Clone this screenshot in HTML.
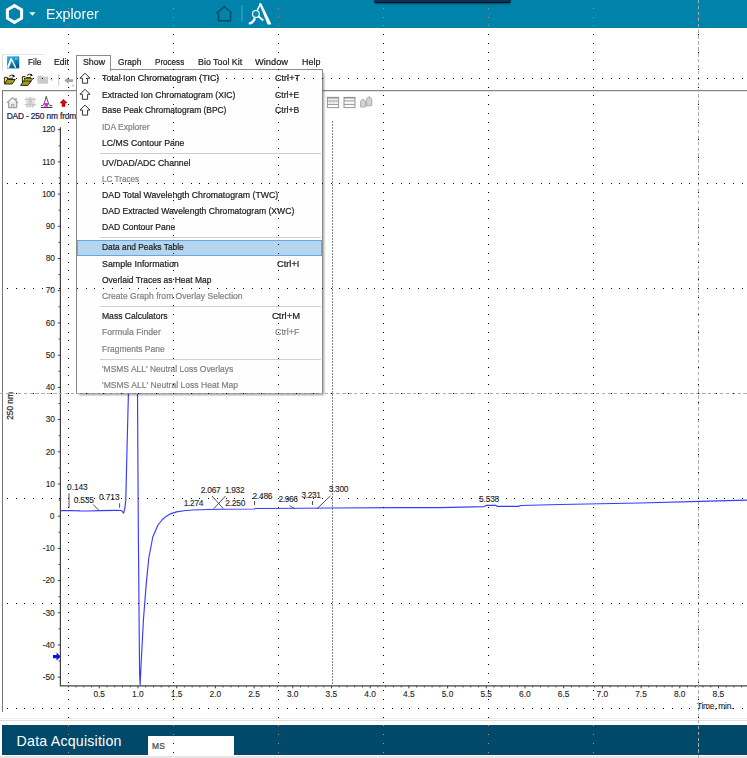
<!DOCTYPE html>
<html><head><meta charset="utf-8">
<style>
html,body{margin:0;padding:0;}
body{width:747px;height:758px;overflow:hidden;background:#fff;position:relative;font-family:"Liberation Sans",sans-serif;}
.abs{position:absolute;}
.t{position:absolute;white-space:nowrap;z-index:3;-webkit-text-stroke:0.22px currentColor;}
svg{position:absolute;left:0;top:0;}
</style></head><body>
<div class="abs" style="left:0;top:0;width:747px;height:28px;background:#0083AB;"></div>
<div class="abs" style="left:373.6px;top:-6px;width:137.6px;height:8.4px;background:#0d3458;border-bottom:1px solid #04101e;border-radius:3px;box-shadow:0 1.2px 1.2px #04506f;"></div>
<svg width="300" height="28" style="z-index:2">
  <polygon points="14.5,5.6 21.6,9.8 21.6,18.2 14.5,22.4 7.4,18.2 7.4,9.8" fill="none" stroke="#fff" stroke-width="3" stroke-linejoin="miter"/>
  <polygon points="29.3,12.2 35.5,12.2 32.4,15.8" fill="#fff"/>
  <path d="M216.2 13.6 L224.3 6.6 L232 13.6 M218.5 13.6 V20.7 H230.6 V13.6" fill="none" stroke="#0b4a67" stroke-width="1.4" stroke-linejoin="miter"/>
  <rect x="241.4" y="5" width="1.1" height="16.5" fill="#4ba3bf"/>
  <path d="M259 3.2 h2.2 L271 23.2 v1.2 h-3.4z" fill="#fff"/>
  <path d="M260.4 4 L257.2 10.5" fill="none" stroke="#fff" stroke-width="1.6"/>
  <path d="M254.9 18.2 Q252.8 23.4 248.8 23.4" fill="none" stroke="#fff" stroke-width="2.4"/>
  <circle cx="255.9" cy="13.9" r="3.4" fill="#0d88af" stroke="#fff" stroke-width="1.2"/>
  <path d="M258.6 16.6 L263.2 20.6" stroke="#fff" stroke-width="2"/>
</svg>
<div class="abs" style="left:2px;top:54px;width:43px;height:1px;background:#e4e4e4;"></div>
<div class="abs" style="left:2px;top:54px;width:1px;height:17px;background:#dcdcdc;"></div>
<div class="abs" style="left:2px;top:89.5px;width:745px;height:1.2px;background:#858585;"></div>
<div class="abs" style="left:2px;top:91px;width:745px;height:1px;background:#e2e2e2;"></div>
<div class="abs" style="left:1.7px;top:90px;width:1.4px;height:622px;background:#787878;"></div>
<div class="abs" style="left:0;top:718px;width:747px;height:1px;background:#ececec;"></div>
<div class="abs" style="left:0;top:720.2px;width:747px;height:1px;background:#dedede;"></div>
<div class="abs" style="left:2px;top:724.8px;width:745px;height:30.7px;background:#00496B;"></div>
<div class="abs" style="left:148px;top:736px;width:86px;height:19px;background:#fff;"></div>
<div class="abs" style="left:0;top:755.5px;width:747px;height:3px;background:#e6e6e6;"></div>
<svg width="120" height="112" style="z-index:2">
 <defs><linearGradient id="ag" x1="0" y1="0" x2="0.5" y2="1"><stop offset="0" stop-color="#2fb0e4"/><stop offset="0.5" stop-color="#1490c4"/><stop offset="1" stop-color="#005a88"/></linearGradient></defs>
 <rect x="7.1" y="56.4" width="12.1" height="12" fill="url(#ag)"/>
 <path d="M7.9 67.6 L11.4 58.4" fill="none" stroke="#fff" stroke-width="2"/>
 <path d="M11.2 58.6 L15.7 67.8" fill="none" stroke="#f4fbff" stroke-width="1.4"/>
 <path d="M15.6 59.8 v-1.6 q1.4 -0.6 1.6 0.4 v1.2" fill="none" stroke="#bfe6f8" stroke-width="0.7"/>
 <!-- folder 1 -->
 <path d="M4.4 83.8 V77.3 h2.8 l1 1 h4.4 v1.6" fill="#f0ea58" stroke="#1c1c08" stroke-width="0.9"/>
 <path d="M4.4 84 l2.9 -4.5 h8 l-3.2 4.5z" fill="#a39c1e" stroke="#1c1c08" stroke-width="0.9" stroke-linejoin="round"/>
 <path d="M9.2 76.2 q2.4 -2.2 5 -0.4" fill="none" stroke="#111" stroke-width="0.9"/>
 <path d="M12.8 74.6 l2.4 1.6 l-2.6 1.2z" fill="#111"/>
 <!-- folder 2 -->
 <path d="M22.4 82.6 V76.5 h2.8 l1 1 h4.4 v1.6" fill="#f0ea58" stroke="#1c1c08" stroke-width="0.9"/>
 <path d="M22.4 83 l2.9 -4.3 h7.4 l-3 4.3z" fill="#c9c238" stroke="#1c1c08" stroke-width="0.8" stroke-linejoin="round"/>
 <path d="M20.6 85.4 l2.9 -4.4 h7.6 l-3.2 4.4z" fill="#a39c1e" stroke="#1c1c08" stroke-width="0.9" stroke-linejoin="round"/>
 <path d="M27 75.4 q2.4 -2.2 5 -0.4" fill="none" stroke="#111" stroke-width="0.9"/>
 <path d="M30.6 73.8 l2.4 1.6 l-2.6 1.2z" fill="#111"/>
 <!-- folder 3 grey -->
 <path d="M37.5 76.6 q0 -1.2 1.2 -1.2 h3 l1 1.2 h5.4 v7.2 h-10.6z" fill="#cbcbcb"/>
 <path d="M50 79.2 h3 l-1.5 1.8z" fill="#b8b8b8"/>
 <rect x="58" y="74.5" width="1.2" height="11" fill="#d2d2d2"/>
 <path d="M64.3 80.6 l4.4 -3.4 v2.1 h4.4 v2.6 h-4.4 v2.1z" fill="#a4a4a4"/>
 <text x="72" y="86.5" font-size="4.5" fill="#aaa" font-family="Liberation Sans">s</text>
 <!-- pane icons -->
 <g fill="none" stroke="#a2a2a2" stroke-width="1.3" stroke-linejoin="round">
  <path d="M7 102.8 L12.6 97.8 L18 102.8"/>
  <path d="M8.6 102 V107.6 H16.6 V102" fill="#ececec"/>
  <path d="M11.5 107.6 v-3.2 h2.4 v3.2" stroke-width="1"/>
  <path d="M16 97.8 v2.6" stroke-width="1.4"/>
 </g>
 <rect x="25.6" y="97.4" width="9.4" height="9.6" fill="#e3e3e3"/>
 <g fill="none" stroke="#c0c0c0" stroke-width="0.9">
  <path d="M24.6 99.4 h11.4 M24.6 104.6 h11.4 M30.3 96.8 v11"/>
  <path d="M27.6 107.6 q2 -9.4 2.7 -9.4 q0.7 0 2.7 9.4"/>
 </g>
 <path d="M40.8 107.4 h11.6" stroke="#2a2a2a" stroke-width="1"/>
 <path d="M41 105.6 h1.6 q1.4 -0.6 3.7 -9.2 q2.3 8.6 3.7 9.2 h2.2" fill="none" stroke="#3a3a3a" stroke-width="0.9" stroke-linejoin="round"/>
 <rect x="44.4" y="103" width="3.5" height="3.6" fill="#f018e6"/>
 <path d="M63.5 99.2 l3.5 3.7 h-2 v3.6 h-3 v-3.6 h-2z" fill="#ee0000" stroke="#5a0000" stroke-width="0.5"/>
</svg>
<svg width="380" height="112" style="z-index:2">
 <g fill="none" stroke="#969696" stroke-width="1">
  <rect x="327.4" y="97.4" width="11.2" height="10.2" fill="#fbfbfb"/>
  <path d="M327.4 101 h11.2 M327.4 104.4 h11.2" />
  <rect x="327.4" y="97.2" width="11.2" height="1.3" fill="#8c8c8c" stroke="none"/>
  <path d="M329 102.7 h8 M329 99.7 h8" stroke="#d0d0d0" stroke-width="0.8" stroke-dasharray="2.5 1"/>
  <rect x="344" y="97.4" width="11" height="10.2" fill="#fbfbfb"/>
  <path d="M344 100.9 h11 M344 104.4 h11"/>
  <rect x="344" y="97.2" width="11" height="1.3" fill="#8c8c8c" stroke="none"/>
 </g>
 <g fill="#d4d4d4" stroke="#a6a6a6" stroke-width="0.9">
  <path d="M360.6 107 v-6 l2.4 -2 l2.6 2 v6z"/>
  <path d="M366.6 105.8 v-6.6 l1 -1.6 h3 l1.2 1.6 v6.6z"/>
  <path d="M369.2 97.4 v-1.2" fill="none"/>
 </g>
</svg>
<svg width="747" height="758" style="z-index:1">
<path d="M60.4 127.3 V686.3 M59.8 685.8 H747" fill="none" stroke="#444" stroke-width="1.2"/>
<path d="M57.8 677.2 H60 M58.6 661.1 H60 M57.8 645.0 H60 M58.6 628.9 H60 M57.8 612.8 H60 M58.6 596.7 H60 M57.8 580.6 H60 M58.6 564.5 H60 M57.8 548.4 H60 M58.6 532.3 H60 M57.8 516.2 H60 M58.6 500.1 H60 M57.8 484.0 H60 M58.6 467.9 H60 M57.8 451.8 H60 M58.6 435.7 H60 M57.8 419.6 H60 M58.6 403.5 H60 M57.8 387.4 H60 M58.6 371.3 H60 M57.8 355.2 H60 M58.6 339.0 H60 M57.8 322.9 H60 M58.6 306.8 H60 M57.8 290.7 H60 M58.6 274.6 H60 M57.8 258.5 H60 M58.6 242.4 H60 M57.8 226.3 H60 M58.6 210.2 H60 M57.8 194.1 H60 M58.6 178.0 H60 M57.8 161.9 H60 M58.6 145.8 H60 M57.8 129.7 H60" stroke="#3c3c3c" stroke-width="1" fill="none"/>
<path d="M68.3 686 V687.4 M76.1 686 V687.4 M83.8 686 V687.4 M91.6 686 V687.4 M99.3 686 V688.3 M107.0 686 V687.4 M114.8 686 V687.4 M122.5 686 V687.4 M130.3 686 V687.4 M138.0 686 V688.3 M145.7 686 V687.4 M153.5 686 V687.4 M161.2 686 V687.4 M169.0 686 V687.4 M176.7 686 V688.3 M184.4 686 V687.4 M192.2 686 V687.4 M199.9 686 V687.4 M207.7 686 V687.4 M215.4 686 V688.3 M223.1 686 V687.4 M230.9 686 V687.4 M238.6 686 V687.4 M246.4 686 V687.4 M254.1 686 V688.3 M261.8 686 V687.4 M269.6 686 V687.4 M277.3 686 V687.4 M285.1 686 V687.4 M292.8 686 V688.3 M300.5 686 V687.4 M308.3 686 V687.4 M316.0 686 V687.4 M323.8 686 V687.4 M331.5 686 V688.3 M339.2 686 V687.4 M347.0 686 V687.4 M354.7 686 V687.4 M362.5 686 V687.4 M370.2 686 V688.3 M377.9 686 V687.4 M385.7 686 V687.4 M393.4 686 V687.4 M401.2 686 V687.4 M408.9 686 V688.3 M416.6 686 V687.4 M424.4 686 V687.4 M432.1 686 V687.4 M439.9 686 V687.4 M447.6 686 V688.3 M455.3 686 V687.4 M463.1 686 V687.4 M470.8 686 V687.4 M478.6 686 V687.4 M486.3 686 V688.3 M494.0 686 V687.4 M501.8 686 V687.4 M509.5 686 V687.4 M517.3 686 V687.4 M525.0 686 V688.3 M532.7 686 V687.4 M540.5 686 V687.4 M548.2 686 V687.4 M556.0 686 V687.4 M563.7 686 V688.3 M571.4 686 V687.4 M579.2 686 V687.4 M586.9 686 V687.4 M594.7 686 V687.4 M602.4 686 V688.3 M610.1 686 V687.4 M617.9 686 V687.4 M625.6 686 V687.4 M633.4 686 V687.4 M641.1 686 V688.3 M648.8 686 V687.4 M656.6 686 V687.4 M664.3 686 V687.4 M672.1 686 V687.4 M679.8 686 V688.3 M687.5 686 V687.4 M695.3 686 V687.4 M703.0 686 V687.4 M710.8 686 V687.4 M718.5 686 V688.3 M726.2 686 V687.4 M734.0 686 V687.4 M741.7 686 V687.4" stroke="#3c3c3c" stroke-width="1" fill="none"/>
<line x1="332.5" y1="121" x2="332.5" y2="685" stroke="#888" stroke-width="1" stroke-dasharray="2 1"/>
<polyline points="61,510.6 70,510.5 80,510.9 88,511 100,510.6 115,510.4 121.5,510.5 123.6,513.2 124.9,508 125.8,500 126.5,470 128.4,394 128.8,380 137.2,380 137.5,394 138.4,540 139.6,674 140.1,684.7 141.4,658 143.5,618.7 146.2,584.4 148.8,558 152.8,537 158,525 162,520 166,516.4 171,513.6 176.5,511.9 184,510.8 192.3,510 200,509.7 218.7,509.3 254,509 256,508.5 300,508.3 333,508 400,507.6 440,507.6 484,506.6 486,505.4 496,505.4 497.5,506.4 518,506.4 521,505.5 560,504.5 600,503.8 640,503 700,501.4 747,500.1" fill="none" stroke="#3a3aff" stroke-width="1.15" stroke-linejoin="round"/>
<path d="M69 493.3 V507.8 M93.2 504.5 L98.7 510.2 M119.6 503.3 V507.8 M212 496 L223.4 508.7 M225.5 496 L213.8 508.7 M254.5 501 V505 M289.6 505.6 L294.7 508.7 M312.5 501 V505 M330.3 496 L317 508.7" stroke="#3c3c3c" stroke-width="0.9" fill="none"/>
<path d="M53 655 h3.6 v-2.6 l4 4.2 l-4 4.2 v-2.6 h-3.6 z" fill="#1010e0"/>
</svg>
<div class="abs" style="white-space:nowrap;z-index:3;left:-9.6px;top:399.6px;width:40px;height:12px;line-height:12px;text-align:center;transform:rotate(-90deg);font-size:8.4px;color:#222;letter-spacing:-0.05px;-webkit-text-stroke:0.2px #222">250 nm</div>
<div class="abs" style="left:79px;top:73px;width:244.6px;height:321.8px;background:rgba(0,0,0,0.4);filter:blur(1.1px);z-index:4"></div>
<div class="abs" style="left:76px;top:69px;width:245px;height:323px;background:#fefefe;border:1px solid #8c8c8c;z-index:5"></div>
<div class="abs" style="left:76px;top:55px;width:33px;height:15px;background:#fefefe;border:1px solid #8c8c8c;border-bottom:none;z-index:5"></div>
<div class="abs" style="left:77px;top:240px;width:243px;height:14px;background:#b5d5ef;border:1px solid #66a7e0;z-index:5"></div>
<div class="abs" style="left:100px;top:153.3px;width:221px;height:1px;background:#d0d0d0;z-index:5"></div>
<div class="abs" style="left:100px;top:237.1px;width:221px;height:1px;background:#d0d0d0;z-index:5"></div>
<div class="abs" style="left:100px;top:306.2px;width:221px;height:1px;background:#d0d0d0;z-index:5"></div>
<div class="abs" style="left:100px;top:359px;width:221px;height:1px;background:#d0d0d0;z-index:5"></div>
<svg width="120" height="130" style="z-index:6">
<path d="M85 73.2 l5 5 h-2.4 v5 h-5.2 v-5 h-2.4z" fill="#fff" stroke="#333" stroke-width="1" stroke-linejoin="miter"/>
<path d="M85 89.3 l5 5 h-2.4 v5 h-5.2 v-5 h-2.4z" fill="#fff" stroke="#333" stroke-width="1" stroke-linejoin="miter"/>
<path d="M85 105.10000000000001 l5 5 h-2.4 v5 h-5.2 v-5 h-2.4z" fill="#fff" stroke="#333" stroke-width="1" stroke-linejoin="miter"/>
</svg>
<div class="t" id="t0" style="left:46.2px;top:3.3px;font-size:15.3px;line-height:21px;color:#fff;-webkit-text-stroke:0;transform-origin:0 50%;transform:scaleX(0.9268);">Explorer</div>
<div class="t" id="t1" style="left:16.6px;top:730.9px;font-size:14.2px;line-height:20px;letter-spacing:0.209px;color:#fff;-webkit-text-stroke:0;">Data Acquisition</div>
<div class="t" id="t2" style="left:152.0px;top:740.2px;font-size:8.4px;line-height:12px;letter-spacing:0.269px;color:#444;">MS</div>
<div class="t" id="t3" style="left:27.5px;top:55.2px;font-size:9.7px;line-height:14px;color:#1b1b1b;transform-origin:0 50%;transform:scaleX(0.8640);">File</div>
<div class="t" id="t4" style="left:53.9px;top:55.2px;font-size:9.7px;line-height:14px;color:#1b1b1b;transform-origin:0 50%;transform:scaleX(0.8920);">Edit</div>
<div class="t" id="t5" style="left:82.7px;top:55.2px;font-size:9.7px;line-height:14px;color:#1b1b1b;z-index:6;transform-origin:0 50%;transform:scaleX(0.9078);">Show</div>
<div class="t" id="t6" style="left:117.6px;top:55.2px;font-size:9.7px;line-height:14px;color:#1b1b1b;transform-origin:0 50%;transform:scaleX(0.8650);">Graph</div>
<div class="t" id="t7" style="left:155.0px;top:55.2px;font-size:9.7px;line-height:14px;color:#1b1b1b;transform-origin:0 50%;transform:scaleX(0.8343);">Process</div>
<div class="t" id="t8" style="left:197.9px;top:55.2px;font-size:9.7px;line-height:14px;color:#1b1b1b;transform-origin:0 50%;transform:scaleX(0.9152);">Bio Tool Kit</div>
<div class="t" id="t9" style="left:255.2px;top:55.2px;font-size:9.7px;line-height:14px;color:#1b1b1b;transform-origin:0 50%;transform:scaleX(0.9603);">Window</div>
<div class="t" id="t10" style="left:301.5px;top:55.2px;font-size:9.7px;line-height:14px;color:#1b1b1b;transform-origin:0 50%;transform:scaleX(0.9229);">Help</div>
<div class="t" id="t11" style="left:42.7px;top:671.0px;font-size:8.4px;line-height:12px;letter-spacing:-0.036px;color:#242424;-webkit-text-stroke:0.1px;">-50</div>
<div class="t" id="t12" style="left:42.7px;top:638.7px;font-size:8.4px;line-height:12px;letter-spacing:-0.036px;color:#242424;-webkit-text-stroke:0.1px;">-40</div>
<div class="t" id="t13" style="left:42.7px;top:606.5px;font-size:8.4px;line-height:12px;letter-spacing:-0.036px;color:#242424;-webkit-text-stroke:0.1px;">-30</div>
<div class="t" id="t14" style="left:42.7px;top:574.3px;font-size:8.4px;line-height:12px;letter-spacing:-0.036px;color:#242424;-webkit-text-stroke:0.1px;">-20</div>
<div class="t" id="t15" style="left:42.7px;top:542.1px;font-size:8.4px;line-height:12px;letter-spacing:-0.036px;color:#242424;-webkit-text-stroke:0.1px;">-10</div>
<div class="t" id="t16" style="left:49.7px;top:509.9px;font-size:8.4px;line-height:12px;letter-spacing:0.328px;color:#242424;-webkit-text-stroke:0.1px;">0</div>
<div class="t" id="t17" style="left:45.7px;top:477.7px;font-size:8.4px;line-height:12px;letter-spacing:-0.164px;color:#242424;-webkit-text-stroke:0.1px;">10</div>
<div class="t" id="t18" style="left:45.7px;top:445.5px;font-size:8.4px;line-height:12px;letter-spacing:-0.164px;color:#242424;-webkit-text-stroke:0.1px;">20</div>
<div class="t" id="t19" style="left:45.7px;top:413.3px;font-size:8.4px;line-height:12px;letter-spacing:-0.164px;color:#242424;-webkit-text-stroke:0.1px;">30</div>
<div class="t" id="t20" style="left:45.7px;top:381.1px;font-size:8.4px;line-height:12px;letter-spacing:-0.164px;color:#242424;-webkit-text-stroke:0.1px;">40</div>
<div class="t" id="t21" style="left:45.7px;top:348.9px;font-size:8.4px;line-height:12px;letter-spacing:-0.164px;color:#242424;-webkit-text-stroke:0.1px;">50</div>
<div class="t" id="t22" style="left:45.7px;top:316.6px;font-size:8.4px;line-height:12px;letter-spacing:-0.164px;color:#242424;-webkit-text-stroke:0.1px;">60</div>
<div class="t" id="t23" style="left:45.7px;top:284.4px;font-size:8.4px;line-height:12px;letter-spacing:-0.164px;color:#242424;-webkit-text-stroke:0.1px;">70</div>
<div class="t" id="t24" style="left:45.7px;top:252.2px;font-size:8.4px;line-height:12px;letter-spacing:-0.164px;color:#242424;-webkit-text-stroke:0.1px;">80</div>
<div class="t" id="t25" style="left:45.7px;top:220.0px;font-size:8.4px;line-height:12px;letter-spacing:-0.164px;color:#242424;-webkit-text-stroke:0.1px;">90</div>
<div class="t" id="t26" style="left:41.9px;top:187.8px;font-size:8.4px;line-height:12px;letter-spacing:-0.395px;color:#242424;-webkit-text-stroke:0.1px;">100</div>
<div class="t" id="t27" style="left:41.9px;top:155.6px;font-size:8.4px;line-height:12px;letter-spacing:-0.186px;color:#242424;-webkit-text-stroke:0.1px;">110</div>
<div class="t" id="t28" style="left:41.9px;top:123.4px;font-size:8.4px;line-height:12px;letter-spacing:-0.395px;color:#242424;-webkit-text-stroke:0.1px;">120</div>
<div class="t" id="t29" style="left:93.4px;top:687.6px;font-size:8.4px;line-height:12px;letter-spacing:-0.019px;color:#242424;-webkit-text-stroke:0.1px;">0.5</div>
<div class="t" id="t30" style="left:132.1px;top:687.6px;font-size:8.4px;line-height:12px;letter-spacing:-0.019px;color:#242424;-webkit-text-stroke:0.1px;">1.0</div>
<div class="t" id="t31" style="left:170.8px;top:687.6px;font-size:8.4px;line-height:12px;letter-spacing:-0.019px;color:#242424;-webkit-text-stroke:0.1px;">1.5</div>
<div class="t" id="t32" style="left:209.5px;top:687.6px;font-size:8.4px;line-height:12px;letter-spacing:-0.019px;color:#242424;-webkit-text-stroke:0.1px;">2.0</div>
<div class="t" id="t33" style="left:248.2px;top:687.6px;font-size:8.4px;line-height:12px;letter-spacing:-0.019px;color:#242424;-webkit-text-stroke:0.1px;">2.5</div>
<div class="t" id="t34" style="left:286.9px;top:687.6px;font-size:8.4px;line-height:12px;letter-spacing:-0.019px;color:#242424;-webkit-text-stroke:0.1px;">3.0</div>
<div class="t" id="t35" style="left:325.6px;top:687.6px;font-size:8.4px;line-height:12px;letter-spacing:-0.019px;color:#242424;-webkit-text-stroke:0.1px;">3.5</div>
<div class="t" id="t36" style="left:364.3px;top:687.6px;font-size:8.4px;line-height:12px;letter-spacing:-0.019px;color:#242424;-webkit-text-stroke:0.1px;">4.0</div>
<div class="t" id="t37" style="left:403.0px;top:687.6px;font-size:8.4px;line-height:12px;letter-spacing:-0.019px;color:#242424;-webkit-text-stroke:0.1px;">4.5</div>
<div class="t" id="t38" style="left:441.7px;top:687.6px;font-size:8.4px;line-height:12px;letter-spacing:-0.019px;color:#242424;-webkit-text-stroke:0.1px;">5.0</div>
<div class="t" id="t39" style="left:480.4px;top:687.6px;font-size:8.4px;line-height:12px;letter-spacing:-0.019px;color:#242424;-webkit-text-stroke:0.1px;">5.5</div>
<div class="t" id="t40" style="left:519.1px;top:687.6px;font-size:8.4px;line-height:12px;letter-spacing:-0.019px;color:#242424;-webkit-text-stroke:0.1px;">6.0</div>
<div class="t" id="t41" style="left:557.8px;top:687.6px;font-size:8.4px;line-height:12px;letter-spacing:-0.019px;color:#242424;-webkit-text-stroke:0.1px;">6.5</div>
<div class="t" id="t42" style="left:596.5px;top:687.6px;font-size:8.4px;line-height:12px;letter-spacing:-0.019px;color:#242424;-webkit-text-stroke:0.1px;">7.0</div>
<div class="t" id="t43" style="left:635.2px;top:687.6px;font-size:8.4px;line-height:12px;letter-spacing:-0.019px;color:#242424;-webkit-text-stroke:0.1px;">7.5</div>
<div class="t" id="t44" style="left:673.9px;top:687.6px;font-size:8.4px;line-height:12px;letter-spacing:-0.019px;color:#242424;-webkit-text-stroke:0.1px;">8.0</div>
<div class="t" id="t45" style="left:712.6px;top:687.6px;font-size:8.4px;line-height:12px;letter-spacing:-0.019px;color:#242424;-webkit-text-stroke:0.1px;">8.5</div>
<div class="t" id="t46" style="left:696.9px;top:699.6px;font-size:8.4px;line-height:12px;letter-spacing:-0.248px;color:#242424;-webkit-text-stroke:0.1px;">Time, min.</div>
<div class="t" id="t47" style="left:6.7px;top:109.7px;font-size:8.4px;line-height:12px;letter-spacing:-0.161px;color:#20204a;">DAD - 250 nm from</div>
<div class="t" id="t48" style="left:67.1px;top:480.6px;font-size:8.4px;line-height:12px;letter-spacing:-0.094px;color:#242424;-webkit-text-stroke:0.1px;">0.143</div>
<div class="t" id="t49" style="left:73.7px;top:493.5px;font-size:8.4px;line-height:12px;letter-spacing:-0.194px;color:#242424;-webkit-text-stroke:0.1px;">0.535</div>
<div class="t" id="t50" style="left:98.9px;top:491.0px;font-size:8.4px;line-height:12px;letter-spacing:-0.074px;color:#242424;-webkit-text-stroke:0.1px;">0.713</div>
<div class="t" id="t51" style="left:183.7px;top:497.0px;font-size:8.4px;line-height:12px;letter-spacing:-0.314px;color:#242424;-webkit-text-stroke:0.1px;">1.274</div>
<div class="t" id="t52" style="left:200.7px;top:484.4px;font-size:8.4px;line-height:12px;letter-spacing:-0.234px;color:#242424;-webkit-text-stroke:0.1px;">2.067</div>
<div class="t" id="t53" style="left:224.9px;top:484.4px;font-size:8.4px;line-height:12px;letter-spacing:-0.314px;color:#242424;-webkit-text-stroke:0.1px;">1.932</div>
<div class="t" id="t54" style="left:225.2px;top:497.0px;font-size:8.4px;line-height:12px;letter-spacing:-0.214px;color:#242424;-webkit-text-stroke:0.1px;">2.250</div>
<div class="t" id="t55" style="left:252.4px;top:490.0px;font-size:8.4px;line-height:12px;letter-spacing:-0.214px;color:#242424;-webkit-text-stroke:0.1px;">2.486</div>
<div class="t" id="t56" style="left:278.4px;top:492.8px;font-size:8.4px;line-height:12px;letter-spacing:-0.334px;color:#242424;-webkit-text-stroke:0.1px;">2.966</div>
<div class="t" id="t57" style="left:301.5px;top:489.4px;font-size:8.4px;line-height:12px;letter-spacing:-0.394px;color:#242424;-webkit-text-stroke:0.1px;">3.231</div>
<div class="t" id="t58" style="left:328.7px;top:483.0px;font-size:8.4px;line-height:12px;letter-spacing:-0.314px;color:#242424;-webkit-text-stroke:0.1px;">3.300</div>
<div class="t" id="t59" style="left:479.1px;top:493.4px;font-size:8.4px;line-height:12px;letter-spacing:-0.194px;color:#242424;-webkit-text-stroke:0.1px;">5.538</div>
<div class="t" id="t60" style="left:102.1px;top:71.4px;font-size:9.7px;line-height:14px;color:#1b1b1b;z-index:6;transform-origin:0 50%;transform:scaleX(0.9116);">Total Ion Chromatogram (TIC)</div>
<div class="t" id="t61" style="left:274.5px;top:71.4px;font-size:9.7px;line-height:14px;color:#1b1b1b;z-index:6;transform-origin:0 50%;transform:scaleX(0.9384);">Ctrl+T</div>
<div class="t" id="t62" style="left:102.1px;top:87.5px;font-size:9.7px;line-height:14px;color:#1b1b1b;z-index:6;transform-origin:0 50%;transform:scaleX(0.8913);">Extracted Ion Chromatogram (XIC)</div>
<div class="t" id="t63" style="left:275.2px;top:87.5px;font-size:9.7px;line-height:14px;color:#1b1b1b;z-index:6;transform-origin:0 50%;transform:scaleX(0.8938);">Ctrl+E</div>
<div class="t" id="t64" style="left:102.1px;top:103.3px;font-size:9.7px;line-height:14px;color:#1b1b1b;z-index:6;transform-origin:0 50%;transform:scaleX(0.8686);">Base Peak Chromatogram (BPC)</div>
<div class="t" id="t65" style="left:275.2px;top:103.3px;font-size:9.7px;line-height:14px;color:#1b1b1b;z-index:6;transform-origin:0 50%;transform:scaleX(0.8938);">Ctrl+B</div>
<div class="t" id="t66" style="left:102.1px;top:119.6px;font-size:9.7px;line-height:14px;color:#808080;z-index:6;transform-origin:0 50%;transform:scaleX(0.8752);">IDA Explorer</div>
<div class="t" id="t67" style="left:102.1px;top:135.6px;font-size:9.7px;line-height:14px;color:#1b1b1b;z-index:6;transform-origin:0 50%;transform:scaleX(0.8947);">LC/MS Contour Pane</div>
<div class="t" id="t68" style="left:102.1px;top:155.8px;font-size:9.7px;line-height:14px;color:#1b1b1b;z-index:6;transform-origin:0 50%;transform:scaleX(0.8972);">UV/DAD/ADC Channel</div>
<div class="t" id="t69" style="left:102.1px;top:172.1px;font-size:9.7px;line-height:14px;color:#808080;z-index:6;transform-origin:0 50%;transform:scaleX(0.8402);">LC Traces</div>
<div class="t" id="t70" style="left:102.1px;top:188.0px;font-size:9.7px;line-height:14px;color:#1b1b1b;z-index:6;transform-origin:0 50%;transform:scaleX(0.9016);">DAD Total Wavelength Chromatogram (TWC)</div>
<div class="t" id="t71" style="left:102.1px;top:204.1px;font-size:9.7px;line-height:14px;color:#1b1b1b;z-index:6;transform-origin:0 50%;transform:scaleX(0.8878);">DAD Extracted Wavelength Chromatogram (XWC)</div>
<div class="t" id="t72" style="left:102.1px;top:219.9px;font-size:9.7px;line-height:14px;color:#1b1b1b;z-index:6;transform-origin:0 50%;transform:scaleX(0.8850);">DAD Contour Pane</div>
<div class="t" id="t73" style="left:102.1px;top:240.4px;font-size:9.7px;line-height:14px;color:#1b1b1b;z-index:6;transform-origin:0 50%;transform:scaleX(0.8636);">Data and Peaks Table</div>
<div class="t" id="t74" style="left:102.1px;top:256.7px;font-size:9.7px;line-height:14px;color:#1b1b1b;z-index:6;transform-origin:0 50%;transform:scaleX(0.9143);">Sample Information</div>
<div class="t" id="t75" style="left:277.1px;top:256.7px;font-size:9.7px;line-height:14px;color:#1b1b1b;z-index:6;transform-origin:0 50%;transform:scaleX(0.9564);">Ctrl+I</div>
<div class="t" id="t76" style="left:102.1px;top:272.6px;font-size:9.7px;line-height:14px;color:#1b1b1b;z-index:6;transform-origin:0 50%;transform:scaleX(0.8720);">Overlaid Traces as Heat Map</div>
<div class="t" id="t77" style="left:102.1px;top:288.7px;font-size:9.7px;line-height:14px;color:#808080;z-index:6;transform-origin:0 50%;transform:scaleX(0.8822);">Create Graph from Overlay Selection</div>
<div class="t" id="t78" style="left:102.1px;top:309.2px;font-size:9.7px;line-height:14px;color:#1b1b1b;z-index:6;transform-origin:0 50%;transform:scaleX(0.8829);">Mass Calculators</div>
<div class="t" id="t79" style="left:271.5px;top:309.2px;font-size:9.7px;line-height:14px;color:#1b1b1b;z-index:6;transform-origin:0 50%;transform:scaleX(0.9723);">Ctrl+M</div>
<div class="t" id="t80" style="left:102.1px;top:325.3px;font-size:9.7px;line-height:14px;color:#808080;z-index:6;transform-origin:0 50%;transform:scaleX(0.8951);">Formula Finder</div>
<div class="t" id="t81" style="left:275.2px;top:325.3px;font-size:9.7px;line-height:14px;color:#808080;z-index:6;transform-origin:0 50%;transform:scaleX(0.9121);">Ctrl+F</div>
<div class="t" id="t82" style="left:102.1px;top:341.5px;font-size:9.7px;line-height:14px;color:#808080;z-index:6;transform-origin:0 50%;transform:scaleX(0.8740);">Fragments Pane</div>
<div class="t" id="t83" style="left:102.1px;top:361.7px;font-size:9.7px;line-height:14px;color:#808080;z-index:6;transform-origin:0 50%;transform:scaleX(0.8738);">'MSMS ALL' Neutral Loss Overlays</div>
<div class="t" id="t84" style="left:102.1px;top:377.8px;font-size:9.7px;line-height:14px;color:#808080;z-index:6;transform-origin:0 50%;transform:scaleX(0.8842);">'MSMS ALL' Neutral Loss Heat Map</div>
<svg width="747" height="758" style="z-index:9" shape-rendering="crispEdges">
<rect x="68" y="8" width="1" height="1" fill="#e08040"/>
<rect x="68" y="17" width="1" height="1" fill="#e08040"/>
<rect x="68" y="25" width="1" height="1" fill="#e08040"/>
<rect x="68" y="34" width="1" height="1" fill="#000"/>
<rect x="68" y="43" width="1" height="1" fill="#000"/>
<rect x="68" y="52" width="1" height="1" fill="#000"/>
<rect x="68" y="60" width="1" height="1" fill="#000"/>
<rect x="68" y="69" width="1" height="1" fill="#000"/>
<rect x="68" y="78" width="1" height="1" fill="#000"/>
<rect x="68" y="87" width="1" height="1" fill="#000"/>
<rect x="68" y="95" width="1" height="1" fill="#000"/>
<rect x="68" y="104" width="1" height="1" fill="#000"/>
<rect x="68" y="113" width="1" height="1" fill="#000"/>
<rect x="68" y="122" width="1" height="1" fill="#000"/>
<rect x="68" y="130" width="1" height="1" fill="#000"/>
<rect x="68" y="139" width="1" height="1" fill="#000"/>
<rect x="68" y="148" width="1" height="1" fill="#000"/>
<rect x="68" y="157" width="1" height="1" fill="#000"/>
<rect x="68" y="165" width="1" height="1" fill="#000"/>
<rect x="68" y="174" width="1" height="1" fill="#000"/>
<rect x="68" y="183" width="1" height="1" fill="#000"/>
<rect x="68" y="192" width="1" height="1" fill="#000"/>
<rect x="68" y="200" width="1" height="1" fill="#000"/>
<rect x="68" y="209" width="1" height="1" fill="#000"/>
<rect x="68" y="218" width="1" height="1" fill="#000"/>
<rect x="68" y="227" width="1" height="1" fill="#000"/>
<rect x="68" y="235" width="1" height="1" fill="#000"/>
<rect x="68" y="244" width="1" height="1" fill="#000"/>
<rect x="68" y="253" width="1" height="1" fill="#000"/>
<rect x="68" y="262" width="1" height="1" fill="#000"/>
<rect x="68" y="270" width="1" height="1" fill="#000"/>
<rect x="68" y="279" width="1" height="1" fill="#000"/>
<rect x="68" y="288" width="1" height="1" fill="#000"/>
<rect x="68" y="297" width="1" height="1" fill="#000"/>
<rect x="68" y="305" width="1" height="1" fill="#000"/>
<rect x="68" y="314" width="1" height="1" fill="#000"/>
<rect x="68" y="323" width="1" height="1" fill="#000"/>
<rect x="68" y="332" width="1" height="1" fill="#000"/>
<rect x="68" y="340" width="1" height="1" fill="#000"/>
<rect x="68" y="349" width="1" height="1" fill="#000"/>
<rect x="68" y="358" width="1" height="1" fill="#000"/>
<rect x="68" y="367" width="1" height="1" fill="#000"/>
<rect x="68" y="375" width="1" height="1" fill="#000"/>
<rect x="68" y="384" width="1" height="1" fill="#000"/>
<rect x="68" y="393" width="1" height="1" fill="#000"/>
<rect x="68" y="402" width="1" height="1" fill="#000"/>
<rect x="68" y="410" width="1" height="1" fill="#000"/>
<rect x="68" y="419" width="1" height="1" fill="#000"/>
<rect x="68" y="428" width="1" height="1" fill="#000"/>
<rect x="68" y="437" width="1" height="1" fill="#000"/>
<rect x="68" y="445" width="1" height="1" fill="#000"/>
<rect x="68" y="454" width="1" height="1" fill="#000"/>
<rect x="68" y="463" width="1" height="1" fill="#000"/>
<rect x="68" y="472" width="1" height="1" fill="#000"/>
<rect x="68" y="480" width="1" height="1" fill="#000"/>
<rect x="68" y="489" width="1" height="1" fill="#000"/>
<rect x="68" y="498" width="1" height="1" fill="#000"/>
<rect x="68" y="507" width="1" height="1" fill="#000"/>
<rect x="68" y="515" width="1" height="1" fill="#000"/>
<rect x="68" y="524" width="1" height="1" fill="#000"/>
<rect x="68" y="533" width="1" height="1" fill="#000"/>
<rect x="68" y="542" width="1" height="1" fill="#000"/>
<rect x="68" y="550" width="1" height="1" fill="#000"/>
<rect x="68" y="559" width="1" height="1" fill="#000"/>
<rect x="68" y="568" width="1" height="1" fill="#000"/>
<rect x="68" y="577" width="1" height="1" fill="#000"/>
<rect x="68" y="585" width="1" height="1" fill="#000"/>
<rect x="68" y="594" width="1" height="1" fill="#000"/>
<rect x="68" y="603" width="1" height="1" fill="#000"/>
<rect x="68" y="612" width="1" height="1" fill="#000"/>
<rect x="68" y="620" width="1" height="1" fill="#000"/>
<rect x="68" y="629" width="1" height="1" fill="#000"/>
<rect x="68" y="638" width="1" height="1" fill="#000"/>
<rect x="68" y="647" width="1" height="1" fill="#000"/>
<rect x="68" y="655" width="1" height="1" fill="#000"/>
<rect x="68" y="664" width="1" height="1" fill="#000"/>
<rect x="68" y="673" width="1" height="1" fill="#000"/>
<rect x="68" y="682" width="1" height="1" fill="#000"/>
<rect x="68" y="690" width="1" height="1" fill="#000"/>
<rect x="68" y="699" width="1" height="1" fill="#000"/>
<rect x="68" y="708" width="1" height="1" fill="#000"/>
<rect x="68" y="717" width="1" height="1" fill="#000"/>
<rect x="68" y="725" width="1" height="1" fill="#c89060"/>
<rect x="68" y="734" width="1" height="1" fill="#c89060"/>
<rect x="68" y="743" width="1" height="1" fill="#c89060"/>
<rect x="68" y="752" width="1" height="1" fill="#c89060"/>
<rect x="173" y="8" width="1" height="1" fill="#e08040"/>
<rect x="173" y="17" width="1" height="1" fill="#e08040"/>
<rect x="173" y="25" width="1" height="1" fill="#e08040"/>
<rect x="173" y="34" width="1" height="1" fill="#000"/>
<rect x="173" y="43" width="1" height="1" fill="#000"/>
<rect x="173" y="52" width="1" height="1" fill="#000"/>
<rect x="173" y="60" width="1" height="1" fill="#000"/>
<rect x="173" y="69" width="1" height="1" fill="#000"/>
<rect x="173" y="78" width="1" height="1" fill="#000"/>
<rect x="173" y="87" width="1" height="1" fill="#000"/>
<rect x="173" y="95" width="1" height="1" fill="#000"/>
<rect x="173" y="104" width="1" height="1" fill="#000"/>
<rect x="173" y="113" width="1" height="1" fill="#000"/>
<rect x="173" y="122" width="1" height="1" fill="#000"/>
<rect x="173" y="130" width="1" height="1" fill="#000"/>
<rect x="173" y="139" width="1" height="1" fill="#000"/>
<rect x="173" y="148" width="1" height="1" fill="#000"/>
<rect x="173" y="157" width="1" height="1" fill="#000"/>
<rect x="173" y="165" width="1" height="1" fill="#000"/>
<rect x="173" y="174" width="1" height="1" fill="#000"/>
<rect x="173" y="183" width="1" height="1" fill="#000"/>
<rect x="173" y="192" width="1" height="1" fill="#000"/>
<rect x="173" y="200" width="1" height="1" fill="#000"/>
<rect x="173" y="209" width="1" height="1" fill="#000"/>
<rect x="173" y="218" width="1" height="1" fill="#000"/>
<rect x="173" y="227" width="1" height="1" fill="#000"/>
<rect x="173" y="235" width="1" height="1" fill="#000"/>
<rect x="173" y="244" width="1" height="1" fill="#000"/>
<rect x="173" y="253" width="1" height="1" fill="#000"/>
<rect x="173" y="262" width="1" height="1" fill="#000"/>
<rect x="173" y="270" width="1" height="1" fill="#000"/>
<rect x="173" y="279" width="1" height="1" fill="#000"/>
<rect x="173" y="288" width="1" height="1" fill="#000"/>
<rect x="173" y="297" width="1" height="1" fill="#000"/>
<rect x="173" y="305" width="1" height="1" fill="#000"/>
<rect x="173" y="314" width="1" height="1" fill="#000"/>
<rect x="173" y="323" width="1" height="1" fill="#000"/>
<rect x="173" y="332" width="1" height="1" fill="#000"/>
<rect x="173" y="340" width="1" height="1" fill="#000"/>
<rect x="173" y="349" width="1" height="1" fill="#000"/>
<rect x="173" y="358" width="1" height="1" fill="#000"/>
<rect x="173" y="367" width="1" height="1" fill="#000"/>
<rect x="173" y="375" width="1" height="1" fill="#000"/>
<rect x="173" y="384" width="1" height="1" fill="#000"/>
<rect x="173" y="393" width="1" height="1" fill="#000"/>
<rect x="173" y="402" width="1" height="1" fill="#000"/>
<rect x="173" y="410" width="1" height="1" fill="#000"/>
<rect x="173" y="419" width="1" height="1" fill="#000"/>
<rect x="173" y="428" width="1" height="1" fill="#000"/>
<rect x="173" y="437" width="1" height="1" fill="#000"/>
<rect x="173" y="445" width="1" height="1" fill="#000"/>
<rect x="173" y="454" width="1" height="1" fill="#000"/>
<rect x="173" y="463" width="1" height="1" fill="#000"/>
<rect x="173" y="472" width="1" height="1" fill="#000"/>
<rect x="173" y="480" width="1" height="1" fill="#000"/>
<rect x="173" y="489" width="1" height="1" fill="#000"/>
<rect x="173" y="498" width="1" height="1" fill="#000"/>
<rect x="173" y="507" width="1" height="1" fill="#000"/>
<rect x="173" y="515" width="1" height="1" fill="#000"/>
<rect x="173" y="524" width="1" height="1" fill="#000"/>
<rect x="173" y="533" width="1" height="1" fill="#000"/>
<rect x="173" y="542" width="1" height="1" fill="#000"/>
<rect x="173" y="550" width="1" height="1" fill="#000"/>
<rect x="173" y="559" width="1" height="1" fill="#000"/>
<rect x="173" y="568" width="1" height="1" fill="#000"/>
<rect x="173" y="577" width="1" height="1" fill="#000"/>
<rect x="173" y="585" width="1" height="1" fill="#000"/>
<rect x="173" y="594" width="1" height="1" fill="#000"/>
<rect x="173" y="603" width="1" height="1" fill="#000"/>
<rect x="173" y="612" width="1" height="1" fill="#000"/>
<rect x="173" y="620" width="1" height="1" fill="#000"/>
<rect x="173" y="629" width="1" height="1" fill="#000"/>
<rect x="173" y="638" width="1" height="1" fill="#000"/>
<rect x="173" y="647" width="1" height="1" fill="#000"/>
<rect x="173" y="655" width="1" height="1" fill="#000"/>
<rect x="173" y="664" width="1" height="1" fill="#000"/>
<rect x="173" y="673" width="1" height="1" fill="#000"/>
<rect x="173" y="682" width="1" height="1" fill="#000"/>
<rect x="173" y="690" width="1" height="1" fill="#000"/>
<rect x="173" y="699" width="1" height="1" fill="#000"/>
<rect x="173" y="708" width="1" height="1" fill="#000"/>
<rect x="173" y="717" width="1" height="1" fill="#000"/>
<rect x="173" y="725" width="1" height="1" fill="#c89060"/>
<rect x="173" y="734" width="1" height="1" fill="#c89060"/>
<rect x="173" y="743" width="1" height="1" fill="#000"/>
<rect x="173" y="752" width="1" height="1" fill="#000"/>
<rect x="278" y="8" width="1" height="1" fill="#e08040"/>
<rect x="278" y="17" width="1" height="1" fill="#e08040"/>
<rect x="278" y="25" width="1" height="1" fill="#e08040"/>
<rect x="278" y="34" width="1" height="1" fill="#000"/>
<rect x="278" y="43" width="1" height="1" fill="#000"/>
<rect x="278" y="52" width="1" height="1" fill="#000"/>
<rect x="278" y="60" width="1" height="1" fill="#000"/>
<rect x="278" y="69" width="1" height="1" fill="#000"/>
<rect x="278" y="78" width="1" height="1" fill="#000"/>
<rect x="278" y="87" width="1" height="1" fill="#000"/>
<rect x="278" y="95" width="1" height="1" fill="#000"/>
<rect x="278" y="104" width="1" height="1" fill="#000"/>
<rect x="278" y="113" width="1" height="1" fill="#000"/>
<rect x="278" y="122" width="1" height="1" fill="#000"/>
<rect x="278" y="130" width="1" height="1" fill="#000"/>
<rect x="278" y="139" width="1" height="1" fill="#000"/>
<rect x="278" y="148" width="1" height="1" fill="#000"/>
<rect x="278" y="157" width="1" height="1" fill="#000"/>
<rect x="278" y="165" width="1" height="1" fill="#000"/>
<rect x="278" y="174" width="1" height="1" fill="#000"/>
<rect x="278" y="183" width="1" height="1" fill="#000"/>
<rect x="278" y="192" width="1" height="1" fill="#000"/>
<rect x="278" y="200" width="1" height="1" fill="#000"/>
<rect x="278" y="209" width="1" height="1" fill="#000"/>
<rect x="278" y="218" width="1" height="1" fill="#000"/>
<rect x="278" y="227" width="1" height="1" fill="#000"/>
<rect x="278" y="235" width="1" height="1" fill="#000"/>
<rect x="278" y="244" width="1" height="1" fill="#000"/>
<rect x="278" y="253" width="1" height="1" fill="#000"/>
<rect x="278" y="262" width="1" height="1" fill="#000"/>
<rect x="278" y="270" width="1" height="1" fill="#000"/>
<rect x="278" y="279" width="1" height="1" fill="#000"/>
<rect x="278" y="288" width="1" height="1" fill="#000"/>
<rect x="278" y="297" width="1" height="1" fill="#000"/>
<rect x="278" y="305" width="1" height="1" fill="#000"/>
<rect x="278" y="314" width="1" height="1" fill="#000"/>
<rect x="278" y="323" width="1" height="1" fill="#000"/>
<rect x="278" y="332" width="1" height="1" fill="#000"/>
<rect x="278" y="340" width="1" height="1" fill="#000"/>
<rect x="278" y="349" width="1" height="1" fill="#000"/>
<rect x="278" y="358" width="1" height="1" fill="#000"/>
<rect x="278" y="367" width="1" height="1" fill="#000"/>
<rect x="278" y="375" width="1" height="1" fill="#000"/>
<rect x="278" y="384" width="1" height="1" fill="#000"/>
<rect x="278" y="393" width="1" height="1" fill="#000"/>
<rect x="278" y="402" width="1" height="1" fill="#000"/>
<rect x="278" y="410" width="1" height="1" fill="#000"/>
<rect x="278" y="419" width="1" height="1" fill="#000"/>
<rect x="278" y="428" width="1" height="1" fill="#000"/>
<rect x="278" y="437" width="1" height="1" fill="#000"/>
<rect x="278" y="445" width="1" height="1" fill="#000"/>
<rect x="278" y="454" width="1" height="1" fill="#000"/>
<rect x="278" y="463" width="1" height="1" fill="#000"/>
<rect x="278" y="472" width="1" height="1" fill="#000"/>
<rect x="278" y="480" width="1" height="1" fill="#000"/>
<rect x="278" y="489" width="1" height="1" fill="#000"/>
<rect x="278" y="498" width="1" height="1" fill="#000"/>
<rect x="278" y="507" width="1" height="1" fill="#000"/>
<rect x="278" y="515" width="1" height="1" fill="#000"/>
<rect x="278" y="524" width="1" height="1" fill="#000"/>
<rect x="278" y="533" width="1" height="1" fill="#000"/>
<rect x="278" y="542" width="1" height="1" fill="#000"/>
<rect x="278" y="550" width="1" height="1" fill="#000"/>
<rect x="278" y="559" width="1" height="1" fill="#000"/>
<rect x="278" y="568" width="1" height="1" fill="#000"/>
<rect x="278" y="577" width="1" height="1" fill="#000"/>
<rect x="278" y="585" width="1" height="1" fill="#000"/>
<rect x="278" y="594" width="1" height="1" fill="#000"/>
<rect x="278" y="603" width="1" height="1" fill="#000"/>
<rect x="278" y="612" width="1" height="1" fill="#000"/>
<rect x="278" y="620" width="1" height="1" fill="#000"/>
<rect x="278" y="629" width="1" height="1" fill="#000"/>
<rect x="278" y="638" width="1" height="1" fill="#000"/>
<rect x="278" y="647" width="1" height="1" fill="#000"/>
<rect x="278" y="655" width="1" height="1" fill="#000"/>
<rect x="278" y="664" width="1" height="1" fill="#000"/>
<rect x="278" y="673" width="1" height="1" fill="#000"/>
<rect x="278" y="682" width="1" height="1" fill="#000"/>
<rect x="278" y="690" width="1" height="1" fill="#000"/>
<rect x="278" y="699" width="1" height="1" fill="#000"/>
<rect x="278" y="708" width="1" height="1" fill="#000"/>
<rect x="278" y="717" width="1" height="1" fill="#000"/>
<rect x="278" y="725" width="1" height="1" fill="#c89060"/>
<rect x="278" y="734" width="1" height="1" fill="#c89060"/>
<rect x="278" y="743" width="1" height="1" fill="#c89060"/>
<rect x="278" y="752" width="1" height="1" fill="#c89060"/>
<rect x="383" y="8" width="1" height="1" fill="#e08040"/>
<rect x="383" y="17" width="1" height="1" fill="#e08040"/>
<rect x="383" y="25" width="1" height="1" fill="#e08040"/>
<rect x="383" y="34" width="1" height="1" fill="#000"/>
<rect x="383" y="43" width="1" height="1" fill="#000"/>
<rect x="383" y="52" width="1" height="1" fill="#000"/>
<rect x="383" y="60" width="1" height="1" fill="#000"/>
<rect x="383" y="69" width="1" height="1" fill="#000"/>
<rect x="383" y="78" width="1" height="1" fill="#000"/>
<rect x="383" y="87" width="1" height="1" fill="#000"/>
<rect x="383" y="95" width="1" height="1" fill="#000"/>
<rect x="383" y="104" width="1" height="1" fill="#000"/>
<rect x="383" y="113" width="1" height="1" fill="#000"/>
<rect x="383" y="122" width="1" height="1" fill="#000"/>
<rect x="383" y="130" width="1" height="1" fill="#000"/>
<rect x="383" y="139" width="1" height="1" fill="#000"/>
<rect x="383" y="148" width="1" height="1" fill="#000"/>
<rect x="383" y="157" width="1" height="1" fill="#000"/>
<rect x="383" y="165" width="1" height="1" fill="#000"/>
<rect x="383" y="174" width="1" height="1" fill="#000"/>
<rect x="383" y="183" width="1" height="1" fill="#000"/>
<rect x="383" y="192" width="1" height="1" fill="#000"/>
<rect x="383" y="200" width="1" height="1" fill="#000"/>
<rect x="383" y="209" width="1" height="1" fill="#000"/>
<rect x="383" y="218" width="1" height="1" fill="#000"/>
<rect x="383" y="227" width="1" height="1" fill="#000"/>
<rect x="383" y="235" width="1" height="1" fill="#000"/>
<rect x="383" y="244" width="1" height="1" fill="#000"/>
<rect x="383" y="253" width="1" height="1" fill="#000"/>
<rect x="383" y="262" width="1" height="1" fill="#000"/>
<rect x="383" y="270" width="1" height="1" fill="#000"/>
<rect x="383" y="279" width="1" height="1" fill="#000"/>
<rect x="383" y="288" width="1" height="1" fill="#000"/>
<rect x="383" y="297" width="1" height="1" fill="#000"/>
<rect x="383" y="305" width="1" height="1" fill="#000"/>
<rect x="383" y="314" width="1" height="1" fill="#000"/>
<rect x="383" y="323" width="1" height="1" fill="#000"/>
<rect x="383" y="332" width="1" height="1" fill="#000"/>
<rect x="383" y="340" width="1" height="1" fill="#000"/>
<rect x="383" y="349" width="1" height="1" fill="#000"/>
<rect x="383" y="358" width="1" height="1" fill="#000"/>
<rect x="383" y="367" width="1" height="1" fill="#000"/>
<rect x="383" y="375" width="1" height="1" fill="#000"/>
<rect x="383" y="384" width="1" height="1" fill="#000"/>
<rect x="383" y="393" width="1" height="1" fill="#000"/>
<rect x="383" y="402" width="1" height="1" fill="#000"/>
<rect x="383" y="410" width="1" height="1" fill="#000"/>
<rect x="383" y="419" width="1" height="1" fill="#000"/>
<rect x="383" y="428" width="1" height="1" fill="#000"/>
<rect x="383" y="437" width="1" height="1" fill="#000"/>
<rect x="383" y="445" width="1" height="1" fill="#000"/>
<rect x="383" y="454" width="1" height="1" fill="#000"/>
<rect x="383" y="463" width="1" height="1" fill="#000"/>
<rect x="383" y="472" width="1" height="1" fill="#000"/>
<rect x="383" y="480" width="1" height="1" fill="#000"/>
<rect x="383" y="489" width="1" height="1" fill="#000"/>
<rect x="383" y="498" width="1" height="1" fill="#000"/>
<rect x="383" y="507" width="1" height="1" fill="#000"/>
<rect x="383" y="515" width="1" height="1" fill="#000"/>
<rect x="383" y="524" width="1" height="1" fill="#000"/>
<rect x="383" y="533" width="1" height="1" fill="#000"/>
<rect x="383" y="542" width="1" height="1" fill="#000"/>
<rect x="383" y="550" width="1" height="1" fill="#000"/>
<rect x="383" y="559" width="1" height="1" fill="#000"/>
<rect x="383" y="568" width="1" height="1" fill="#000"/>
<rect x="383" y="577" width="1" height="1" fill="#000"/>
<rect x="383" y="585" width="1" height="1" fill="#000"/>
<rect x="383" y="594" width="1" height="1" fill="#000"/>
<rect x="383" y="603" width="1" height="1" fill="#000"/>
<rect x="383" y="612" width="1" height="1" fill="#000"/>
<rect x="383" y="620" width="1" height="1" fill="#000"/>
<rect x="383" y="629" width="1" height="1" fill="#000"/>
<rect x="383" y="638" width="1" height="1" fill="#000"/>
<rect x="383" y="647" width="1" height="1" fill="#000"/>
<rect x="383" y="655" width="1" height="1" fill="#000"/>
<rect x="383" y="664" width="1" height="1" fill="#000"/>
<rect x="383" y="673" width="1" height="1" fill="#000"/>
<rect x="383" y="682" width="1" height="1" fill="#000"/>
<rect x="383" y="690" width="1" height="1" fill="#000"/>
<rect x="383" y="699" width="1" height="1" fill="#000"/>
<rect x="383" y="708" width="1" height="1" fill="#000"/>
<rect x="383" y="717" width="1" height="1" fill="#000"/>
<rect x="383" y="725" width="1" height="1" fill="#c89060"/>
<rect x="383" y="734" width="1" height="1" fill="#c89060"/>
<rect x="383" y="743" width="1" height="1" fill="#c89060"/>
<rect x="383" y="752" width="1" height="1" fill="#c89060"/>
<rect x="488" y="8" width="1" height="1" fill="#e08040"/>
<rect x="488" y="17" width="1" height="1" fill="#e08040"/>
<rect x="488" y="25" width="1" height="1" fill="#e08040"/>
<rect x="488" y="34" width="1" height="1" fill="#000"/>
<rect x="488" y="43" width="1" height="1" fill="#000"/>
<rect x="488" y="52" width="1" height="1" fill="#000"/>
<rect x="488" y="60" width="1" height="1" fill="#000"/>
<rect x="488" y="69" width="1" height="1" fill="#000"/>
<rect x="488" y="78" width="1" height="1" fill="#000"/>
<rect x="488" y="87" width="1" height="1" fill="#000"/>
<rect x="488" y="95" width="1" height="1" fill="#000"/>
<rect x="488" y="104" width="1" height="1" fill="#000"/>
<rect x="488" y="113" width="1" height="1" fill="#000"/>
<rect x="488" y="122" width="1" height="1" fill="#000"/>
<rect x="488" y="130" width="1" height="1" fill="#000"/>
<rect x="488" y="139" width="1" height="1" fill="#000"/>
<rect x="488" y="148" width="1" height="1" fill="#000"/>
<rect x="488" y="157" width="1" height="1" fill="#000"/>
<rect x="488" y="165" width="1" height="1" fill="#000"/>
<rect x="488" y="174" width="1" height="1" fill="#000"/>
<rect x="488" y="183" width="1" height="1" fill="#000"/>
<rect x="488" y="192" width="1" height="1" fill="#000"/>
<rect x="488" y="200" width="1" height="1" fill="#000"/>
<rect x="488" y="209" width="1" height="1" fill="#000"/>
<rect x="488" y="218" width="1" height="1" fill="#000"/>
<rect x="488" y="227" width="1" height="1" fill="#000"/>
<rect x="488" y="235" width="1" height="1" fill="#000"/>
<rect x="488" y="244" width="1" height="1" fill="#000"/>
<rect x="488" y="253" width="1" height="1" fill="#000"/>
<rect x="488" y="262" width="1" height="1" fill="#000"/>
<rect x="488" y="270" width="1" height="1" fill="#000"/>
<rect x="488" y="279" width="1" height="1" fill="#000"/>
<rect x="488" y="288" width="1" height="1" fill="#000"/>
<rect x="488" y="297" width="1" height="1" fill="#000"/>
<rect x="488" y="305" width="1" height="1" fill="#000"/>
<rect x="488" y="314" width="1" height="1" fill="#000"/>
<rect x="488" y="323" width="1" height="1" fill="#000"/>
<rect x="488" y="332" width="1" height="1" fill="#000"/>
<rect x="488" y="340" width="1" height="1" fill="#000"/>
<rect x="488" y="349" width="1" height="1" fill="#000"/>
<rect x="488" y="358" width="1" height="1" fill="#000"/>
<rect x="488" y="367" width="1" height="1" fill="#000"/>
<rect x="488" y="375" width="1" height="1" fill="#000"/>
<rect x="488" y="384" width="1" height="1" fill="#000"/>
<rect x="488" y="393" width="1" height="1" fill="#000"/>
<rect x="488" y="402" width="1" height="1" fill="#000"/>
<rect x="488" y="410" width="1" height="1" fill="#000"/>
<rect x="488" y="419" width="1" height="1" fill="#000"/>
<rect x="488" y="428" width="1" height="1" fill="#000"/>
<rect x="488" y="437" width="1" height="1" fill="#000"/>
<rect x="488" y="445" width="1" height="1" fill="#000"/>
<rect x="488" y="454" width="1" height="1" fill="#000"/>
<rect x="488" y="463" width="1" height="1" fill="#000"/>
<rect x="488" y="472" width="1" height="1" fill="#000"/>
<rect x="488" y="480" width="1" height="1" fill="#000"/>
<rect x="488" y="489" width="1" height="1" fill="#000"/>
<rect x="488" y="498" width="1" height="1" fill="#000"/>
<rect x="488" y="507" width="1" height="1" fill="#000"/>
<rect x="488" y="515" width="1" height="1" fill="#000"/>
<rect x="488" y="524" width="1" height="1" fill="#000"/>
<rect x="488" y="533" width="1" height="1" fill="#000"/>
<rect x="488" y="542" width="1" height="1" fill="#000"/>
<rect x="488" y="550" width="1" height="1" fill="#000"/>
<rect x="488" y="559" width="1" height="1" fill="#000"/>
<rect x="488" y="568" width="1" height="1" fill="#000"/>
<rect x="488" y="577" width="1" height="1" fill="#000"/>
<rect x="488" y="585" width="1" height="1" fill="#000"/>
<rect x="488" y="594" width="1" height="1" fill="#000"/>
<rect x="488" y="603" width="1" height="1" fill="#000"/>
<rect x="488" y="612" width="1" height="1" fill="#000"/>
<rect x="488" y="620" width="1" height="1" fill="#000"/>
<rect x="488" y="629" width="1" height="1" fill="#000"/>
<rect x="488" y="638" width="1" height="1" fill="#000"/>
<rect x="488" y="647" width="1" height="1" fill="#000"/>
<rect x="488" y="655" width="1" height="1" fill="#000"/>
<rect x="488" y="664" width="1" height="1" fill="#000"/>
<rect x="488" y="673" width="1" height="1" fill="#000"/>
<rect x="488" y="682" width="1" height="1" fill="#000"/>
<rect x="488" y="690" width="1" height="1" fill="#000"/>
<rect x="488" y="699" width="1" height="1" fill="#000"/>
<rect x="488" y="708" width="1" height="1" fill="#000"/>
<rect x="488" y="717" width="1" height="1" fill="#000"/>
<rect x="488" y="725" width="1" height="1" fill="#c89060"/>
<rect x="488" y="734" width="1" height="1" fill="#c89060"/>
<rect x="488" y="743" width="1" height="1" fill="#c89060"/>
<rect x="488" y="752" width="1" height="1" fill="#c89060"/>
<rect x="593" y="8" width="1" height="1" fill="#e08040"/>
<rect x="593" y="17" width="1" height="1" fill="#e08040"/>
<rect x="593" y="25" width="1" height="1" fill="#e08040"/>
<rect x="593" y="34" width="1" height="1" fill="#000"/>
<rect x="593" y="43" width="1" height="1" fill="#000"/>
<rect x="593" y="52" width="1" height="1" fill="#000"/>
<rect x="593" y="60" width="1" height="1" fill="#000"/>
<rect x="593" y="69" width="1" height="1" fill="#000"/>
<rect x="593" y="78" width="1" height="1" fill="#000"/>
<rect x="593" y="87" width="1" height="1" fill="#000"/>
<rect x="593" y="95" width="1" height="1" fill="#000"/>
<rect x="593" y="104" width="1" height="1" fill="#000"/>
<rect x="593" y="113" width="1" height="1" fill="#000"/>
<rect x="593" y="122" width="1" height="1" fill="#000"/>
<rect x="593" y="130" width="1" height="1" fill="#000"/>
<rect x="593" y="139" width="1" height="1" fill="#000"/>
<rect x="593" y="148" width="1" height="1" fill="#000"/>
<rect x="593" y="157" width="1" height="1" fill="#000"/>
<rect x="593" y="165" width="1" height="1" fill="#000"/>
<rect x="593" y="174" width="1" height="1" fill="#000"/>
<rect x="593" y="183" width="1" height="1" fill="#000"/>
<rect x="593" y="192" width="1" height="1" fill="#000"/>
<rect x="593" y="200" width="1" height="1" fill="#000"/>
<rect x="593" y="209" width="1" height="1" fill="#000"/>
<rect x="593" y="218" width="1" height="1" fill="#000"/>
<rect x="593" y="227" width="1" height="1" fill="#000"/>
<rect x="593" y="235" width="1" height="1" fill="#000"/>
<rect x="593" y="244" width="1" height="1" fill="#000"/>
<rect x="593" y="253" width="1" height="1" fill="#000"/>
<rect x="593" y="262" width="1" height="1" fill="#000"/>
<rect x="593" y="270" width="1" height="1" fill="#000"/>
<rect x="593" y="279" width="1" height="1" fill="#000"/>
<rect x="593" y="288" width="1" height="1" fill="#000"/>
<rect x="593" y="297" width="1" height="1" fill="#000"/>
<rect x="593" y="305" width="1" height="1" fill="#000"/>
<rect x="593" y="314" width="1" height="1" fill="#000"/>
<rect x="593" y="323" width="1" height="1" fill="#000"/>
<rect x="593" y="332" width="1" height="1" fill="#000"/>
<rect x="593" y="340" width="1" height="1" fill="#000"/>
<rect x="593" y="349" width="1" height="1" fill="#000"/>
<rect x="593" y="358" width="1" height="1" fill="#000"/>
<rect x="593" y="367" width="1" height="1" fill="#000"/>
<rect x="593" y="375" width="1" height="1" fill="#000"/>
<rect x="593" y="384" width="1" height="1" fill="#000"/>
<rect x="593" y="393" width="1" height="1" fill="#000"/>
<rect x="593" y="402" width="1" height="1" fill="#000"/>
<rect x="593" y="410" width="1" height="1" fill="#000"/>
<rect x="593" y="419" width="1" height="1" fill="#000"/>
<rect x="593" y="428" width="1" height="1" fill="#000"/>
<rect x="593" y="437" width="1" height="1" fill="#000"/>
<rect x="593" y="445" width="1" height="1" fill="#000"/>
<rect x="593" y="454" width="1" height="1" fill="#000"/>
<rect x="593" y="463" width="1" height="1" fill="#000"/>
<rect x="593" y="472" width="1" height="1" fill="#000"/>
<rect x="593" y="480" width="1" height="1" fill="#000"/>
<rect x="593" y="489" width="1" height="1" fill="#000"/>
<rect x="593" y="498" width="1" height="1" fill="#000"/>
<rect x="593" y="507" width="1" height="1" fill="#000"/>
<rect x="593" y="515" width="1" height="1" fill="#000"/>
<rect x="593" y="524" width="1" height="1" fill="#000"/>
<rect x="593" y="533" width="1" height="1" fill="#000"/>
<rect x="593" y="542" width="1" height="1" fill="#000"/>
<rect x="593" y="550" width="1" height="1" fill="#000"/>
<rect x="593" y="559" width="1" height="1" fill="#000"/>
<rect x="593" y="568" width="1" height="1" fill="#000"/>
<rect x="593" y="577" width="1" height="1" fill="#000"/>
<rect x="593" y="585" width="1" height="1" fill="#000"/>
<rect x="593" y="594" width="1" height="1" fill="#000"/>
<rect x="593" y="603" width="1" height="1" fill="#000"/>
<rect x="593" y="612" width="1" height="1" fill="#000"/>
<rect x="593" y="620" width="1" height="1" fill="#000"/>
<rect x="593" y="629" width="1" height="1" fill="#000"/>
<rect x="593" y="638" width="1" height="1" fill="#000"/>
<rect x="593" y="647" width="1" height="1" fill="#000"/>
<rect x="593" y="655" width="1" height="1" fill="#000"/>
<rect x="593" y="664" width="1" height="1" fill="#000"/>
<rect x="593" y="673" width="1" height="1" fill="#000"/>
<rect x="593" y="682" width="1" height="1" fill="#000"/>
<rect x="593" y="690" width="1" height="1" fill="#000"/>
<rect x="593" y="699" width="1" height="1" fill="#000"/>
<rect x="593" y="708" width="1" height="1" fill="#000"/>
<rect x="593" y="717" width="1" height="1" fill="#000"/>
<rect x="593" y="725" width="1" height="1" fill="#c89060"/>
<rect x="593" y="734" width="1" height="1" fill="#c89060"/>
<rect x="593" y="743" width="1" height="1" fill="#c89060"/>
<rect x="593" y="752" width="1" height="1" fill="#c89060"/>
<line x1="698.5" y1="0" x2="698.5" y2="758" stroke="#adadad" stroke-width="1" stroke-dasharray="3.4 2.5"/>
<rect x="698" y="17" width="1" height="1" fill="#e08040"/>
<rect x="698" y="34" width="1" height="1" fill="#000"/>
<rect x="698" y="52" width="1" height="1" fill="#000"/>
<rect x="698" y="69" width="1" height="1" fill="#000"/>
<rect x="698" y="87" width="1" height="1" fill="#000"/>
<rect x="698" y="104" width="1" height="1" fill="#000"/>
<rect x="698" y="122" width="1" height="1" fill="#000"/>
<rect x="698" y="139" width="1" height="1" fill="#000"/>
<rect x="698" y="157" width="1" height="1" fill="#000"/>
<rect x="698" y="174" width="1" height="1" fill="#000"/>
<rect x="698" y="192" width="1" height="1" fill="#000"/>
<rect x="698" y="209" width="1" height="1" fill="#000"/>
<rect x="698" y="227" width="1" height="1" fill="#000"/>
<rect x="698" y="244" width="1" height="1" fill="#000"/>
<rect x="698" y="262" width="1" height="1" fill="#000"/>
<rect x="698" y="279" width="1" height="1" fill="#000"/>
<rect x="698" y="297" width="1" height="1" fill="#000"/>
<rect x="698" y="314" width="1" height="1" fill="#000"/>
<rect x="698" y="332" width="1" height="1" fill="#000"/>
<rect x="698" y="349" width="1" height="1" fill="#000"/>
<rect x="698" y="367" width="1" height="1" fill="#000"/>
<rect x="698" y="384" width="1" height="1" fill="#000"/>
<rect x="698" y="402" width="1" height="1" fill="#000"/>
<rect x="698" y="419" width="1" height="1" fill="#000"/>
<rect x="698" y="437" width="1" height="1" fill="#000"/>
<rect x="698" y="454" width="1" height="1" fill="#000"/>
<rect x="698" y="472" width="1" height="1" fill="#000"/>
<rect x="698" y="489" width="1" height="1" fill="#000"/>
<rect x="698" y="507" width="1" height="1" fill="#000"/>
<rect x="698" y="524" width="1" height="1" fill="#000"/>
<rect x="698" y="542" width="1" height="1" fill="#000"/>
<rect x="698" y="559" width="1" height="1" fill="#000"/>
<rect x="698" y="577" width="1" height="1" fill="#000"/>
<rect x="698" y="594" width="1" height="1" fill="#000"/>
<rect x="698" y="612" width="1" height="1" fill="#000"/>
<rect x="698" y="629" width="1" height="1" fill="#000"/>
<rect x="698" y="647" width="1" height="1" fill="#000"/>
<rect x="698" y="664" width="1" height="1" fill="#000"/>
<rect x="698" y="682" width="1" height="1" fill="#000"/>
<rect x="698" y="699" width="1" height="1" fill="#000"/>
<rect x="698" y="717" width="1" height="1" fill="#000"/>
<rect x="698" y="734" width="1" height="1" fill="#c89060"/>
<rect x="698" y="752" width="1" height="1" fill="#c89060"/>
<rect x="7" y="78" width="1" height="1" fill="#000"/>
<rect x="16" y="78" width="1" height="1" fill="#000"/>
<rect x="24" y="78" width="1" height="1" fill="#000"/>
<rect x="33" y="78" width="1" height="1" fill="#000"/>
<rect x="42" y="78" width="1" height="1" fill="#000"/>
<rect x="51" y="78" width="1" height="1" fill="#000"/>
<rect x="59" y="78" width="1" height="1" fill="#000"/>
<rect x="68" y="78" width="1" height="1" fill="#000"/>
<rect x="77" y="78" width="1" height="1" fill="#000"/>
<rect x="86" y="78" width="1" height="1" fill="#000"/>
<rect x="94" y="78" width="1" height="1" fill="#000"/>
<rect x="103" y="78" width="1" height="1" fill="#000"/>
<rect x="112" y="78" width="1" height="1" fill="#000"/>
<rect x="121" y="78" width="1" height="1" fill="#000"/>
<rect x="129" y="78" width="1" height="1" fill="#000"/>
<rect x="138" y="78" width="1" height="1" fill="#000"/>
<rect x="147" y="78" width="1" height="1" fill="#000"/>
<rect x="156" y="78" width="1" height="1" fill="#000"/>
<rect x="164" y="78" width="1" height="1" fill="#000"/>
<rect x="173" y="78" width="1" height="1" fill="#000"/>
<rect x="182" y="78" width="1" height="1" fill="#000"/>
<rect x="191" y="78" width="1" height="1" fill="#000"/>
<rect x="199" y="78" width="1" height="1" fill="#000"/>
<rect x="208" y="78" width="1" height="1" fill="#000"/>
<rect x="217" y="78" width="1" height="1" fill="#000"/>
<rect x="226" y="78" width="1" height="1" fill="#000"/>
<rect x="234" y="78" width="1" height="1" fill="#000"/>
<rect x="243" y="78" width="1" height="1" fill="#000"/>
<rect x="252" y="78" width="1" height="1" fill="#000"/>
<rect x="261" y="78" width="1" height="1" fill="#000"/>
<rect x="269" y="78" width="1" height="1" fill="#000"/>
<rect x="278" y="78" width="1" height="1" fill="#000"/>
<rect x="287" y="78" width="1" height="1" fill="#000"/>
<rect x="296" y="78" width="1" height="1" fill="#000"/>
<rect x="304" y="78" width="1" height="1" fill="#000"/>
<rect x="313" y="78" width="1" height="1" fill="#000"/>
<rect x="322" y="78" width="1" height="1" fill="#000"/>
<rect x="331" y="78" width="1" height="1" fill="#000"/>
<rect x="339" y="78" width="1" height="1" fill="#000"/>
<rect x="348" y="78" width="1" height="1" fill="#000"/>
<rect x="357" y="78" width="1" height="1" fill="#000"/>
<rect x="366" y="78" width="1" height="1" fill="#000"/>
<rect x="374" y="78" width="1" height="1" fill="#000"/>
<rect x="383" y="78" width="1" height="1" fill="#000"/>
<rect x="392" y="78" width="1" height="1" fill="#000"/>
<rect x="401" y="78" width="1" height="1" fill="#000"/>
<rect x="409" y="78" width="1" height="1" fill="#000"/>
<rect x="418" y="78" width="1" height="1" fill="#000"/>
<rect x="427" y="78" width="1" height="1" fill="#000"/>
<rect x="436" y="78" width="1" height="1" fill="#000"/>
<rect x="444" y="78" width="1" height="1" fill="#000"/>
<rect x="453" y="78" width="1" height="1" fill="#000"/>
<rect x="462" y="78" width="1" height="1" fill="#000"/>
<rect x="471" y="78" width="1" height="1" fill="#000"/>
<rect x="479" y="78" width="1" height="1" fill="#000"/>
<rect x="488" y="78" width="1" height="1" fill="#000"/>
<rect x="497" y="78" width="1" height="1" fill="#000"/>
<rect x="506" y="78" width="1" height="1" fill="#000"/>
<rect x="514" y="78" width="1" height="1" fill="#000"/>
<rect x="523" y="78" width="1" height="1" fill="#000"/>
<rect x="532" y="78" width="1" height="1" fill="#000"/>
<rect x="541" y="78" width="1" height="1" fill="#000"/>
<rect x="549" y="78" width="1" height="1" fill="#000"/>
<rect x="558" y="78" width="1" height="1" fill="#000"/>
<rect x="567" y="78" width="1" height="1" fill="#000"/>
<rect x="576" y="78" width="1" height="1" fill="#000"/>
<rect x="584" y="78" width="1" height="1" fill="#000"/>
<rect x="593" y="78" width="1" height="1" fill="#000"/>
<rect x="602" y="78" width="1" height="1" fill="#000"/>
<rect x="611" y="78" width="1" height="1" fill="#000"/>
<rect x="619" y="78" width="1" height="1" fill="#000"/>
<rect x="628" y="78" width="1" height="1" fill="#000"/>
<rect x="637" y="78" width="1" height="1" fill="#000"/>
<rect x="646" y="78" width="1" height="1" fill="#000"/>
<rect x="654" y="78" width="1" height="1" fill="#000"/>
<rect x="663" y="78" width="1" height="1" fill="#000"/>
<rect x="672" y="78" width="1" height="1" fill="#000"/>
<rect x="681" y="78" width="1" height="1" fill="#000"/>
<rect x="689" y="78" width="1" height="1" fill="#000"/>
<rect x="698" y="78" width="1" height="1" fill="#000"/>
<rect x="707" y="78" width="1" height="1" fill="#000"/>
<rect x="716" y="78" width="1" height="1" fill="#000"/>
<rect x="724" y="78" width="1" height="1" fill="#000"/>
<rect x="733" y="78" width="1" height="1" fill="#000"/>
<rect x="742" y="78" width="1" height="1" fill="#000"/>
<rect x="7" y="183" width="1" height="1" fill="#000"/>
<rect x="16" y="183" width="1" height="1" fill="#000"/>
<rect x="24" y="183" width="1" height="1" fill="#000"/>
<rect x="33" y="183" width="1" height="1" fill="#000"/>
<rect x="42" y="183" width="1" height="1" fill="#000"/>
<rect x="51" y="183" width="1" height="1" fill="#000"/>
<rect x="59" y="183" width="1" height="1" fill="#000"/>
<rect x="68" y="183" width="1" height="1" fill="#000"/>
<rect x="77" y="183" width="1" height="1" fill="#000"/>
<rect x="86" y="183" width="1" height="1" fill="#000"/>
<rect x="94" y="183" width="1" height="1" fill="#000"/>
<rect x="103" y="183" width="1" height="1" fill="#000"/>
<rect x="112" y="183" width="1" height="1" fill="#000"/>
<rect x="121" y="183" width="1" height="1" fill="#000"/>
<rect x="129" y="183" width="1" height="1" fill="#000"/>
<rect x="138" y="183" width="1" height="1" fill="#000"/>
<rect x="147" y="183" width="1" height="1" fill="#000"/>
<rect x="156" y="183" width="1" height="1" fill="#000"/>
<rect x="164" y="183" width="1" height="1" fill="#000"/>
<rect x="173" y="183" width="1" height="1" fill="#000"/>
<rect x="182" y="183" width="1" height="1" fill="#000"/>
<rect x="191" y="183" width="1" height="1" fill="#000"/>
<rect x="199" y="183" width="1" height="1" fill="#000"/>
<rect x="208" y="183" width="1" height="1" fill="#000"/>
<rect x="217" y="183" width="1" height="1" fill="#000"/>
<rect x="226" y="183" width="1" height="1" fill="#000"/>
<rect x="234" y="183" width="1" height="1" fill="#000"/>
<rect x="243" y="183" width="1" height="1" fill="#000"/>
<rect x="252" y="183" width="1" height="1" fill="#000"/>
<rect x="261" y="183" width="1" height="1" fill="#000"/>
<rect x="269" y="183" width="1" height="1" fill="#000"/>
<rect x="278" y="183" width="1" height="1" fill="#000"/>
<rect x="287" y="183" width="1" height="1" fill="#000"/>
<rect x="296" y="183" width="1" height="1" fill="#000"/>
<rect x="304" y="183" width="1" height="1" fill="#000"/>
<rect x="313" y="183" width="1" height="1" fill="#000"/>
<rect x="322" y="183" width="1" height="1" fill="#000"/>
<rect x="331" y="183" width="1" height="1" fill="#000"/>
<rect x="339" y="183" width="1" height="1" fill="#000"/>
<rect x="348" y="183" width="1" height="1" fill="#000"/>
<rect x="357" y="183" width="1" height="1" fill="#000"/>
<rect x="366" y="183" width="1" height="1" fill="#000"/>
<rect x="374" y="183" width="1" height="1" fill="#000"/>
<rect x="383" y="183" width="1" height="1" fill="#000"/>
<rect x="392" y="183" width="1" height="1" fill="#000"/>
<rect x="401" y="183" width="1" height="1" fill="#000"/>
<rect x="409" y="183" width="1" height="1" fill="#000"/>
<rect x="418" y="183" width="1" height="1" fill="#000"/>
<rect x="427" y="183" width="1" height="1" fill="#000"/>
<rect x="436" y="183" width="1" height="1" fill="#000"/>
<rect x="444" y="183" width="1" height="1" fill="#000"/>
<rect x="453" y="183" width="1" height="1" fill="#000"/>
<rect x="462" y="183" width="1" height="1" fill="#000"/>
<rect x="471" y="183" width="1" height="1" fill="#000"/>
<rect x="479" y="183" width="1" height="1" fill="#000"/>
<rect x="488" y="183" width="1" height="1" fill="#000"/>
<rect x="497" y="183" width="1" height="1" fill="#000"/>
<rect x="506" y="183" width="1" height="1" fill="#000"/>
<rect x="514" y="183" width="1" height="1" fill="#000"/>
<rect x="523" y="183" width="1" height="1" fill="#000"/>
<rect x="532" y="183" width="1" height="1" fill="#000"/>
<rect x="541" y="183" width="1" height="1" fill="#000"/>
<rect x="549" y="183" width="1" height="1" fill="#000"/>
<rect x="558" y="183" width="1" height="1" fill="#000"/>
<rect x="567" y="183" width="1" height="1" fill="#000"/>
<rect x="576" y="183" width="1" height="1" fill="#000"/>
<rect x="584" y="183" width="1" height="1" fill="#000"/>
<rect x="593" y="183" width="1" height="1" fill="#000"/>
<rect x="602" y="183" width="1" height="1" fill="#000"/>
<rect x="611" y="183" width="1" height="1" fill="#000"/>
<rect x="619" y="183" width="1" height="1" fill="#000"/>
<rect x="628" y="183" width="1" height="1" fill="#000"/>
<rect x="637" y="183" width="1" height="1" fill="#000"/>
<rect x="646" y="183" width="1" height="1" fill="#000"/>
<rect x="654" y="183" width="1" height="1" fill="#000"/>
<rect x="663" y="183" width="1" height="1" fill="#000"/>
<rect x="672" y="183" width="1" height="1" fill="#000"/>
<rect x="681" y="183" width="1" height="1" fill="#000"/>
<rect x="689" y="183" width="1" height="1" fill="#000"/>
<rect x="698" y="183" width="1" height="1" fill="#000"/>
<rect x="707" y="183" width="1" height="1" fill="#000"/>
<rect x="716" y="183" width="1" height="1" fill="#000"/>
<rect x="724" y="183" width="1" height="1" fill="#000"/>
<rect x="733" y="183" width="1" height="1" fill="#000"/>
<rect x="742" y="183" width="1" height="1" fill="#000"/>
<rect x="7" y="288" width="1" height="1" fill="#000"/>
<rect x="16" y="288" width="1" height="1" fill="#000"/>
<rect x="24" y="288" width="1" height="1" fill="#000"/>
<rect x="33" y="288" width="1" height="1" fill="#000"/>
<rect x="42" y="288" width="1" height="1" fill="#000"/>
<rect x="51" y="288" width="1" height="1" fill="#000"/>
<rect x="59" y="288" width="1" height="1" fill="#000"/>
<rect x="68" y="288" width="1" height="1" fill="#000"/>
<rect x="77" y="288" width="1" height="1" fill="#000"/>
<rect x="86" y="288" width="1" height="1" fill="#000"/>
<rect x="94" y="288" width="1" height="1" fill="#000"/>
<rect x="103" y="288" width="1" height="1" fill="#000"/>
<rect x="112" y="288" width="1" height="1" fill="#000"/>
<rect x="121" y="288" width="1" height="1" fill="#000"/>
<rect x="129" y="288" width="1" height="1" fill="#000"/>
<rect x="138" y="288" width="1" height="1" fill="#000"/>
<rect x="147" y="288" width="1" height="1" fill="#000"/>
<rect x="156" y="288" width="1" height="1" fill="#000"/>
<rect x="164" y="288" width="1" height="1" fill="#000"/>
<rect x="173" y="288" width="1" height="1" fill="#000"/>
<rect x="182" y="288" width="1" height="1" fill="#000"/>
<rect x="191" y="288" width="1" height="1" fill="#000"/>
<rect x="199" y="288" width="1" height="1" fill="#000"/>
<rect x="208" y="288" width="1" height="1" fill="#000"/>
<rect x="217" y="288" width="1" height="1" fill="#000"/>
<rect x="226" y="288" width="1" height="1" fill="#000"/>
<rect x="234" y="288" width="1" height="1" fill="#000"/>
<rect x="243" y="288" width="1" height="1" fill="#000"/>
<rect x="252" y="288" width="1" height="1" fill="#000"/>
<rect x="261" y="288" width="1" height="1" fill="#000"/>
<rect x="269" y="288" width="1" height="1" fill="#000"/>
<rect x="278" y="288" width="1" height="1" fill="#000"/>
<rect x="287" y="288" width="1" height="1" fill="#000"/>
<rect x="296" y="288" width="1" height="1" fill="#000"/>
<rect x="304" y="288" width="1" height="1" fill="#000"/>
<rect x="313" y="288" width="1" height="1" fill="#000"/>
<rect x="322" y="288" width="1" height="1" fill="#000"/>
<rect x="331" y="288" width="1" height="1" fill="#000"/>
<rect x="339" y="288" width="1" height="1" fill="#000"/>
<rect x="348" y="288" width="1" height="1" fill="#000"/>
<rect x="357" y="288" width="1" height="1" fill="#000"/>
<rect x="366" y="288" width="1" height="1" fill="#000"/>
<rect x="374" y="288" width="1" height="1" fill="#000"/>
<rect x="383" y="288" width="1" height="1" fill="#000"/>
<rect x="392" y="288" width="1" height="1" fill="#000"/>
<rect x="401" y="288" width="1" height="1" fill="#000"/>
<rect x="409" y="288" width="1" height="1" fill="#000"/>
<rect x="418" y="288" width="1" height="1" fill="#000"/>
<rect x="427" y="288" width="1" height="1" fill="#000"/>
<rect x="436" y="288" width="1" height="1" fill="#000"/>
<rect x="444" y="288" width="1" height="1" fill="#000"/>
<rect x="453" y="288" width="1" height="1" fill="#000"/>
<rect x="462" y="288" width="1" height="1" fill="#000"/>
<rect x="471" y="288" width="1" height="1" fill="#000"/>
<rect x="479" y="288" width="1" height="1" fill="#000"/>
<rect x="488" y="288" width="1" height="1" fill="#000"/>
<rect x="497" y="288" width="1" height="1" fill="#000"/>
<rect x="506" y="288" width="1" height="1" fill="#000"/>
<rect x="514" y="288" width="1" height="1" fill="#000"/>
<rect x="523" y="288" width="1" height="1" fill="#000"/>
<rect x="532" y="288" width="1" height="1" fill="#000"/>
<rect x="541" y="288" width="1" height="1" fill="#000"/>
<rect x="549" y="288" width="1" height="1" fill="#000"/>
<rect x="558" y="288" width="1" height="1" fill="#000"/>
<rect x="567" y="288" width="1" height="1" fill="#000"/>
<rect x="576" y="288" width="1" height="1" fill="#000"/>
<rect x="584" y="288" width="1" height="1" fill="#000"/>
<rect x="593" y="288" width="1" height="1" fill="#000"/>
<rect x="602" y="288" width="1" height="1" fill="#000"/>
<rect x="611" y="288" width="1" height="1" fill="#000"/>
<rect x="619" y="288" width="1" height="1" fill="#000"/>
<rect x="628" y="288" width="1" height="1" fill="#000"/>
<rect x="637" y="288" width="1" height="1" fill="#000"/>
<rect x="646" y="288" width="1" height="1" fill="#000"/>
<rect x="654" y="288" width="1" height="1" fill="#000"/>
<rect x="663" y="288" width="1" height="1" fill="#000"/>
<rect x="672" y="288" width="1" height="1" fill="#000"/>
<rect x="681" y="288" width="1" height="1" fill="#000"/>
<rect x="689" y="288" width="1" height="1" fill="#000"/>
<rect x="698" y="288" width="1" height="1" fill="#000"/>
<rect x="707" y="288" width="1" height="1" fill="#000"/>
<rect x="716" y="288" width="1" height="1" fill="#000"/>
<rect x="724" y="288" width="1" height="1" fill="#000"/>
<rect x="733" y="288" width="1" height="1" fill="#000"/>
<rect x="742" y="288" width="1" height="1" fill="#000"/>
<line x1="0" y1="393.5" x2="747" y2="393.5" stroke="#adadad" stroke-width="1" stroke-dasharray="3.4 2.5"/>
<rect x="16" y="393" width="1" height="1" fill="#000"/>
<rect x="33" y="393" width="1" height="1" fill="#000"/>
<rect x="51" y="393" width="1" height="1" fill="#000"/>
<rect x="68" y="393" width="1" height="1" fill="#000"/>
<rect x="86" y="393" width="1" height="1" fill="#000"/>
<rect x="103" y="393" width="1" height="1" fill="#000"/>
<rect x="121" y="393" width="1" height="1" fill="#000"/>
<rect x="138" y="393" width="1" height="1" fill="#000"/>
<rect x="156" y="393" width="1" height="1" fill="#000"/>
<rect x="173" y="393" width="1" height="1" fill="#000"/>
<rect x="191" y="393" width="1" height="1" fill="#000"/>
<rect x="208" y="393" width="1" height="1" fill="#000"/>
<rect x="226" y="393" width="1" height="1" fill="#000"/>
<rect x="243" y="393" width="1" height="1" fill="#000"/>
<rect x="261" y="393" width="1" height="1" fill="#000"/>
<rect x="278" y="393" width="1" height="1" fill="#000"/>
<rect x="296" y="393" width="1" height="1" fill="#000"/>
<rect x="313" y="393" width="1" height="1" fill="#000"/>
<rect x="331" y="393" width="1" height="1" fill="#000"/>
<rect x="348" y="393" width="1" height="1" fill="#000"/>
<rect x="366" y="393" width="1" height="1" fill="#000"/>
<rect x="383" y="393" width="1" height="1" fill="#000"/>
<rect x="401" y="393" width="1" height="1" fill="#000"/>
<rect x="418" y="393" width="1" height="1" fill="#000"/>
<rect x="436" y="393" width="1" height="1" fill="#000"/>
<rect x="453" y="393" width="1" height="1" fill="#000"/>
<rect x="471" y="393" width="1" height="1" fill="#000"/>
<rect x="488" y="393" width="1" height="1" fill="#000"/>
<rect x="506" y="393" width="1" height="1" fill="#000"/>
<rect x="523" y="393" width="1" height="1" fill="#000"/>
<rect x="541" y="393" width="1" height="1" fill="#000"/>
<rect x="558" y="393" width="1" height="1" fill="#000"/>
<rect x="576" y="393" width="1" height="1" fill="#000"/>
<rect x="593" y="393" width="1" height="1" fill="#000"/>
<rect x="611" y="393" width="1" height="1" fill="#000"/>
<rect x="628" y="393" width="1" height="1" fill="#000"/>
<rect x="646" y="393" width="1" height="1" fill="#000"/>
<rect x="663" y="393" width="1" height="1" fill="#000"/>
<rect x="681" y="393" width="1" height="1" fill="#000"/>
<rect x="698" y="393" width="1" height="1" fill="#000"/>
<rect x="716" y="393" width="1" height="1" fill="#000"/>
<rect x="733" y="393" width="1" height="1" fill="#000"/>
<rect x="7" y="498" width="1" height="1" fill="#000"/>
<rect x="16" y="498" width="1" height="1" fill="#000"/>
<rect x="24" y="498" width="1" height="1" fill="#000"/>
<rect x="33" y="498" width="1" height="1" fill="#000"/>
<rect x="42" y="498" width="1" height="1" fill="#000"/>
<rect x="51" y="498" width="1" height="1" fill="#000"/>
<rect x="59" y="498" width="1" height="1" fill="#000"/>
<rect x="68" y="498" width="1" height="1" fill="#000"/>
<rect x="77" y="498" width="1" height="1" fill="#000"/>
<rect x="86" y="498" width="1" height="1" fill="#000"/>
<rect x="94" y="498" width="1" height="1" fill="#000"/>
<rect x="103" y="498" width="1" height="1" fill="#000"/>
<rect x="112" y="498" width="1" height="1" fill="#000"/>
<rect x="121" y="498" width="1" height="1" fill="#000"/>
<rect x="129" y="498" width="1" height="1" fill="#000"/>
<rect x="138" y="498" width="1" height="1" fill="#000"/>
<rect x="147" y="498" width="1" height="1" fill="#000"/>
<rect x="156" y="498" width="1" height="1" fill="#000"/>
<rect x="164" y="498" width="1" height="1" fill="#000"/>
<rect x="173" y="498" width="1" height="1" fill="#000"/>
<rect x="182" y="498" width="1" height="1" fill="#000"/>
<rect x="191" y="498" width="1" height="1" fill="#000"/>
<rect x="199" y="498" width="1" height="1" fill="#000"/>
<rect x="208" y="498" width="1" height="1" fill="#000"/>
<rect x="217" y="498" width="1" height="1" fill="#000"/>
<rect x="226" y="498" width="1" height="1" fill="#000"/>
<rect x="234" y="498" width="1" height="1" fill="#000"/>
<rect x="243" y="498" width="1" height="1" fill="#000"/>
<rect x="252" y="498" width="1" height="1" fill="#000"/>
<rect x="261" y="498" width="1" height="1" fill="#000"/>
<rect x="269" y="498" width="1" height="1" fill="#000"/>
<rect x="278" y="498" width="1" height="1" fill="#000"/>
<rect x="287" y="498" width="1" height="1" fill="#000"/>
<rect x="296" y="498" width="1" height="1" fill="#000"/>
<rect x="304" y="498" width="1" height="1" fill="#000"/>
<rect x="313" y="498" width="1" height="1" fill="#000"/>
<rect x="322" y="498" width="1" height="1" fill="#000"/>
<rect x="331" y="498" width="1" height="1" fill="#000"/>
<rect x="339" y="498" width="1" height="1" fill="#000"/>
<rect x="348" y="498" width="1" height="1" fill="#000"/>
<rect x="357" y="498" width="1" height="1" fill="#000"/>
<rect x="366" y="498" width="1" height="1" fill="#000"/>
<rect x="374" y="498" width="1" height="1" fill="#000"/>
<rect x="383" y="498" width="1" height="1" fill="#000"/>
<rect x="392" y="498" width="1" height="1" fill="#000"/>
<rect x="401" y="498" width="1" height="1" fill="#000"/>
<rect x="409" y="498" width="1" height="1" fill="#000"/>
<rect x="418" y="498" width="1" height="1" fill="#000"/>
<rect x="427" y="498" width="1" height="1" fill="#000"/>
<rect x="436" y="498" width="1" height="1" fill="#000"/>
<rect x="444" y="498" width="1" height="1" fill="#000"/>
<rect x="453" y="498" width="1" height="1" fill="#000"/>
<rect x="462" y="498" width="1" height="1" fill="#000"/>
<rect x="471" y="498" width="1" height="1" fill="#000"/>
<rect x="479" y="498" width="1" height="1" fill="#000"/>
<rect x="488" y="498" width="1" height="1" fill="#000"/>
<rect x="497" y="498" width="1" height="1" fill="#000"/>
<rect x="506" y="498" width="1" height="1" fill="#000"/>
<rect x="514" y="498" width="1" height="1" fill="#000"/>
<rect x="523" y="498" width="1" height="1" fill="#000"/>
<rect x="532" y="498" width="1" height="1" fill="#000"/>
<rect x="541" y="498" width="1" height="1" fill="#000"/>
<rect x="549" y="498" width="1" height="1" fill="#000"/>
<rect x="558" y="498" width="1" height="1" fill="#000"/>
<rect x="567" y="498" width="1" height="1" fill="#000"/>
<rect x="576" y="498" width="1" height="1" fill="#000"/>
<rect x="584" y="498" width="1" height="1" fill="#000"/>
<rect x="593" y="498" width="1" height="1" fill="#000"/>
<rect x="602" y="498" width="1" height="1" fill="#000"/>
<rect x="611" y="498" width="1" height="1" fill="#000"/>
<rect x="619" y="498" width="1" height="1" fill="#000"/>
<rect x="628" y="498" width="1" height="1" fill="#000"/>
<rect x="637" y="498" width="1" height="1" fill="#000"/>
<rect x="646" y="498" width="1" height="1" fill="#000"/>
<rect x="654" y="498" width="1" height="1" fill="#000"/>
<rect x="663" y="498" width="1" height="1" fill="#000"/>
<rect x="672" y="498" width="1" height="1" fill="#000"/>
<rect x="681" y="498" width="1" height="1" fill="#000"/>
<rect x="689" y="498" width="1" height="1" fill="#000"/>
<rect x="698" y="498" width="1" height="1" fill="#000"/>
<rect x="707" y="498" width="1" height="1" fill="#000"/>
<rect x="716" y="498" width="1" height="1" fill="#000"/>
<rect x="724" y="498" width="1" height="1" fill="#000"/>
<rect x="733" y="498" width="1" height="1" fill="#000"/>
<rect x="742" y="498" width="1" height="1" fill="#000"/>
<rect x="7" y="603" width="1" height="1" fill="#000"/>
<rect x="16" y="603" width="1" height="1" fill="#000"/>
<rect x="24" y="603" width="1" height="1" fill="#000"/>
<rect x="33" y="603" width="1" height="1" fill="#000"/>
<rect x="42" y="603" width="1" height="1" fill="#000"/>
<rect x="51" y="603" width="1" height="1" fill="#000"/>
<rect x="59" y="603" width="1" height="1" fill="#000"/>
<rect x="68" y="603" width="1" height="1" fill="#000"/>
<rect x="77" y="603" width="1" height="1" fill="#000"/>
<rect x="86" y="603" width="1" height="1" fill="#000"/>
<rect x="94" y="603" width="1" height="1" fill="#000"/>
<rect x="103" y="603" width="1" height="1" fill="#000"/>
<rect x="112" y="603" width="1" height="1" fill="#000"/>
<rect x="121" y="603" width="1" height="1" fill="#000"/>
<rect x="129" y="603" width="1" height="1" fill="#000"/>
<rect x="138" y="603" width="1" height="1" fill="#000"/>
<rect x="147" y="603" width="1" height="1" fill="#000"/>
<rect x="156" y="603" width="1" height="1" fill="#000"/>
<rect x="164" y="603" width="1" height="1" fill="#000"/>
<rect x="173" y="603" width="1" height="1" fill="#000"/>
<rect x="182" y="603" width="1" height="1" fill="#000"/>
<rect x="191" y="603" width="1" height="1" fill="#000"/>
<rect x="199" y="603" width="1" height="1" fill="#000"/>
<rect x="208" y="603" width="1" height="1" fill="#000"/>
<rect x="217" y="603" width="1" height="1" fill="#000"/>
<rect x="226" y="603" width="1" height="1" fill="#000"/>
<rect x="234" y="603" width="1" height="1" fill="#000"/>
<rect x="243" y="603" width="1" height="1" fill="#000"/>
<rect x="252" y="603" width="1" height="1" fill="#000"/>
<rect x="261" y="603" width="1" height="1" fill="#000"/>
<rect x="269" y="603" width="1" height="1" fill="#000"/>
<rect x="278" y="603" width="1" height="1" fill="#000"/>
<rect x="287" y="603" width="1" height="1" fill="#000"/>
<rect x="296" y="603" width="1" height="1" fill="#000"/>
<rect x="304" y="603" width="1" height="1" fill="#000"/>
<rect x="313" y="603" width="1" height="1" fill="#000"/>
<rect x="322" y="603" width="1" height="1" fill="#000"/>
<rect x="331" y="603" width="1" height="1" fill="#000"/>
<rect x="339" y="603" width="1" height="1" fill="#000"/>
<rect x="348" y="603" width="1" height="1" fill="#000"/>
<rect x="357" y="603" width="1" height="1" fill="#000"/>
<rect x="366" y="603" width="1" height="1" fill="#000"/>
<rect x="374" y="603" width="1" height="1" fill="#000"/>
<rect x="383" y="603" width="1" height="1" fill="#000"/>
<rect x="392" y="603" width="1" height="1" fill="#000"/>
<rect x="401" y="603" width="1" height="1" fill="#000"/>
<rect x="409" y="603" width="1" height="1" fill="#000"/>
<rect x="418" y="603" width="1" height="1" fill="#000"/>
<rect x="427" y="603" width="1" height="1" fill="#000"/>
<rect x="436" y="603" width="1" height="1" fill="#000"/>
<rect x="444" y="603" width="1" height="1" fill="#000"/>
<rect x="453" y="603" width="1" height="1" fill="#000"/>
<rect x="462" y="603" width="1" height="1" fill="#000"/>
<rect x="471" y="603" width="1" height="1" fill="#000"/>
<rect x="479" y="603" width="1" height="1" fill="#000"/>
<rect x="488" y="603" width="1" height="1" fill="#000"/>
<rect x="497" y="603" width="1" height="1" fill="#000"/>
<rect x="506" y="603" width="1" height="1" fill="#000"/>
<rect x="514" y="603" width="1" height="1" fill="#000"/>
<rect x="523" y="603" width="1" height="1" fill="#000"/>
<rect x="532" y="603" width="1" height="1" fill="#000"/>
<rect x="541" y="603" width="1" height="1" fill="#000"/>
<rect x="549" y="603" width="1" height="1" fill="#000"/>
<rect x="558" y="603" width="1" height="1" fill="#000"/>
<rect x="567" y="603" width="1" height="1" fill="#000"/>
<rect x="576" y="603" width="1" height="1" fill="#000"/>
<rect x="584" y="603" width="1" height="1" fill="#000"/>
<rect x="593" y="603" width="1" height="1" fill="#000"/>
<rect x="602" y="603" width="1" height="1" fill="#000"/>
<rect x="611" y="603" width="1" height="1" fill="#000"/>
<rect x="619" y="603" width="1" height="1" fill="#000"/>
<rect x="628" y="603" width="1" height="1" fill="#000"/>
<rect x="637" y="603" width="1" height="1" fill="#000"/>
<rect x="646" y="603" width="1" height="1" fill="#000"/>
<rect x="654" y="603" width="1" height="1" fill="#000"/>
<rect x="663" y="603" width="1" height="1" fill="#000"/>
<rect x="672" y="603" width="1" height="1" fill="#000"/>
<rect x="681" y="603" width="1" height="1" fill="#000"/>
<rect x="689" y="603" width="1" height="1" fill="#000"/>
<rect x="698" y="603" width="1" height="1" fill="#000"/>
<rect x="707" y="603" width="1" height="1" fill="#000"/>
<rect x="716" y="603" width="1" height="1" fill="#000"/>
<rect x="724" y="603" width="1" height="1" fill="#000"/>
<rect x="733" y="603" width="1" height="1" fill="#000"/>
<rect x="742" y="603" width="1" height="1" fill="#000"/>
<rect x="7" y="708" width="1" height="1" fill="#000"/>
<rect x="16" y="708" width="1" height="1" fill="#000"/>
<rect x="24" y="708" width="1" height="1" fill="#000"/>
<rect x="33" y="708" width="1" height="1" fill="#000"/>
<rect x="42" y="708" width="1" height="1" fill="#000"/>
<rect x="51" y="708" width="1" height="1" fill="#000"/>
<rect x="59" y="708" width="1" height="1" fill="#000"/>
<rect x="68" y="708" width="1" height="1" fill="#000"/>
<rect x="77" y="708" width="1" height="1" fill="#000"/>
<rect x="86" y="708" width="1" height="1" fill="#000"/>
<rect x="94" y="708" width="1" height="1" fill="#000"/>
<rect x="103" y="708" width="1" height="1" fill="#000"/>
<rect x="112" y="708" width="1" height="1" fill="#000"/>
<rect x="121" y="708" width="1" height="1" fill="#000"/>
<rect x="129" y="708" width="1" height="1" fill="#000"/>
<rect x="138" y="708" width="1" height="1" fill="#000"/>
<rect x="147" y="708" width="1" height="1" fill="#000"/>
<rect x="156" y="708" width="1" height="1" fill="#000"/>
<rect x="164" y="708" width="1" height="1" fill="#000"/>
<rect x="173" y="708" width="1" height="1" fill="#000"/>
<rect x="182" y="708" width="1" height="1" fill="#000"/>
<rect x="191" y="708" width="1" height="1" fill="#000"/>
<rect x="199" y="708" width="1" height="1" fill="#000"/>
<rect x="208" y="708" width="1" height="1" fill="#000"/>
<rect x="217" y="708" width="1" height="1" fill="#000"/>
<rect x="226" y="708" width="1" height="1" fill="#000"/>
<rect x="234" y="708" width="1" height="1" fill="#000"/>
<rect x="243" y="708" width="1" height="1" fill="#000"/>
<rect x="252" y="708" width="1" height="1" fill="#000"/>
<rect x="261" y="708" width="1" height="1" fill="#000"/>
<rect x="269" y="708" width="1" height="1" fill="#000"/>
<rect x="278" y="708" width="1" height="1" fill="#000"/>
<rect x="287" y="708" width="1" height="1" fill="#000"/>
<rect x="296" y="708" width="1" height="1" fill="#000"/>
<rect x="304" y="708" width="1" height="1" fill="#000"/>
<rect x="313" y="708" width="1" height="1" fill="#000"/>
<rect x="322" y="708" width="1" height="1" fill="#000"/>
<rect x="331" y="708" width="1" height="1" fill="#000"/>
<rect x="339" y="708" width="1" height="1" fill="#000"/>
<rect x="348" y="708" width="1" height="1" fill="#000"/>
<rect x="357" y="708" width="1" height="1" fill="#000"/>
<rect x="366" y="708" width="1" height="1" fill="#000"/>
<rect x="374" y="708" width="1" height="1" fill="#000"/>
<rect x="383" y="708" width="1" height="1" fill="#000"/>
<rect x="392" y="708" width="1" height="1" fill="#000"/>
<rect x="401" y="708" width="1" height="1" fill="#000"/>
<rect x="409" y="708" width="1" height="1" fill="#000"/>
<rect x="418" y="708" width="1" height="1" fill="#000"/>
<rect x="427" y="708" width="1" height="1" fill="#000"/>
<rect x="436" y="708" width="1" height="1" fill="#000"/>
<rect x="444" y="708" width="1" height="1" fill="#000"/>
<rect x="453" y="708" width="1" height="1" fill="#000"/>
<rect x="462" y="708" width="1" height="1" fill="#000"/>
<rect x="471" y="708" width="1" height="1" fill="#000"/>
<rect x="479" y="708" width="1" height="1" fill="#000"/>
<rect x="488" y="708" width="1" height="1" fill="#000"/>
<rect x="497" y="708" width="1" height="1" fill="#000"/>
<rect x="506" y="708" width="1" height="1" fill="#000"/>
<rect x="514" y="708" width="1" height="1" fill="#000"/>
<rect x="523" y="708" width="1" height="1" fill="#000"/>
<rect x="532" y="708" width="1" height="1" fill="#000"/>
<rect x="541" y="708" width="1" height="1" fill="#000"/>
<rect x="549" y="708" width="1" height="1" fill="#000"/>
<rect x="558" y="708" width="1" height="1" fill="#000"/>
<rect x="567" y="708" width="1" height="1" fill="#000"/>
<rect x="576" y="708" width="1" height="1" fill="#000"/>
<rect x="584" y="708" width="1" height="1" fill="#000"/>
<rect x="593" y="708" width="1" height="1" fill="#000"/>
<rect x="602" y="708" width="1" height="1" fill="#000"/>
<rect x="611" y="708" width="1" height="1" fill="#000"/>
<rect x="619" y="708" width="1" height="1" fill="#000"/>
<rect x="628" y="708" width="1" height="1" fill="#000"/>
<rect x="637" y="708" width="1" height="1" fill="#000"/>
<rect x="646" y="708" width="1" height="1" fill="#000"/>
<rect x="654" y="708" width="1" height="1" fill="#000"/>
<rect x="663" y="708" width="1" height="1" fill="#000"/>
<rect x="672" y="708" width="1" height="1" fill="#000"/>
<rect x="681" y="708" width="1" height="1" fill="#000"/>
<rect x="689" y="708" width="1" height="1" fill="#000"/>
<rect x="698" y="708" width="1" height="1" fill="#000"/>
<rect x="707" y="708" width="1" height="1" fill="#000"/>
<rect x="716" y="708" width="1" height="1" fill="#000"/>
<rect x="724" y="708" width="1" height="1" fill="#000"/>
<rect x="733" y="708" width="1" height="1" fill="#000"/>
<rect x="742" y="708" width="1" height="1" fill="#000"/>
</svg>
</body></html>
